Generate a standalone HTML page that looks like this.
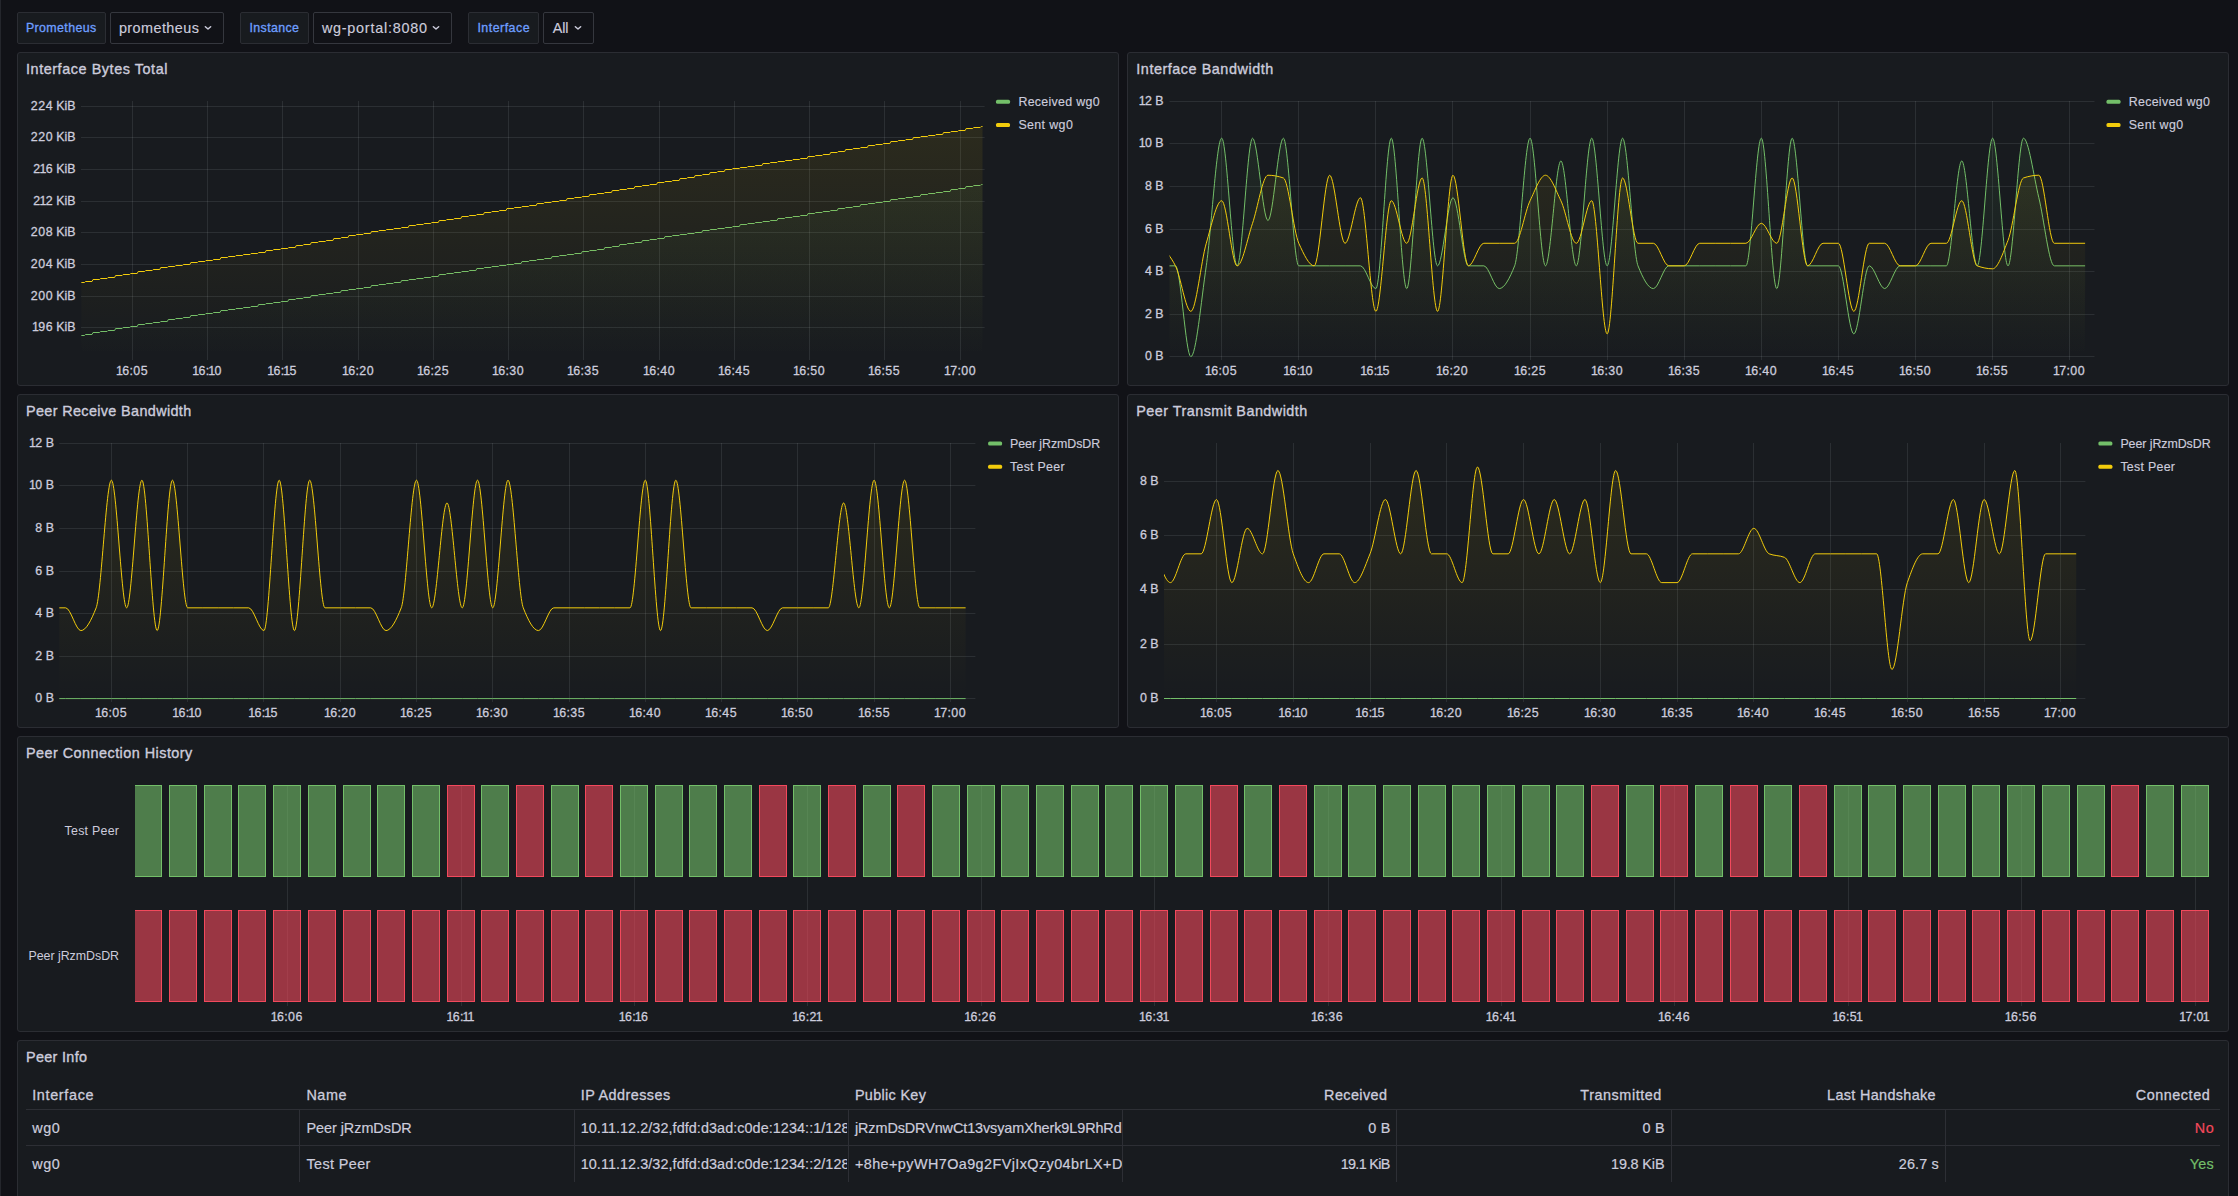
<!DOCTYPE html>
<html lang="en"><head><meta charset="utf-8"><title>WireGuard Portal - Grafana</title>
<style>
html,body{margin:0;padding:0;background:#111217;}
body{width:2238px;height:1196px;overflow:hidden;position:relative;font-family:"Liberation Sans",sans-serif;color:#ccccdc;}
.t{position:absolute;white-space:nowrap;line-height:20px;margin:0;padding:0;}
.abs{position:absolute;width:0;height:0;}
.panel{position:absolute;box-sizing:border-box;background:#181b1f;border:1px solid #2b2d33;border-radius:3px;overflow:hidden;}
.cv{position:absolute;overflow:visible;}
.cv text{font-family:"Liberation Sans",sans-serif;}
.vl{position:absolute;box-sizing:border-box;top:12px;height:32px;background:#181b1f;border:1px solid #2b2d33;border-radius:2px;}
.vs{position:absolute;box-sizing:border-box;top:12px;height:32px;background:#111217;border:1px solid #35373e;border-radius:2px;}
.edge{position:absolute;left:0;top:0;width:1px;height:1196px;background:#24262c;}
.hl{position:absolute;height:1px;background:#2d2f35;}
.vln{position:absolute;width:1px;background:#2d2f35;}
</style></head><body>
<div class="edge"></div>

<nav class="abs" style="left:0;top:0">
<div class="var">
<label class="vl" style="left:17px;width:89px"><span class="abs" style="left:-18px;top:-13px"><span class="t" style="top:18.30px;font-size:12.4px;color:#6e9fff;letter-spacing:0.394px;-webkit-text-stroke:0.3px #6e9fff;left:25.90px;">Prometheus</span></span></label>
<div class="vs" role="combobox" style="left:110px;width:114px"><span class="abs" style="left:-111px;top:-13px"><span class="t" style="top:18.00px;font-size:14.4px;color:#ccccdc;letter-spacing:0.439px;-webkit-text-stroke:0.15px #ccccdc;left:118.90px;">prometheus</span><svg style="position:absolute;left:202.0px;top:22.3px" width="12" height="12" viewBox="0 0 12 12"><path d="M3.35 4.75 L6 7.0 L8.65 4.75" fill="none" stroke="#ccccdc" stroke-width="1.5" stroke-linecap="round" stroke-linejoin="round"/></svg></span></div>
</div>
<div class="var">
<label class="vl" style="left:240px;width:69px"><span class="abs" style="left:-241px;top:-13px"><span class="t" style="top:18.30px;font-size:12.4px;color:#6e9fff;letter-spacing:0.375px;-webkit-text-stroke:0.3px #6e9fff;left:249.50px;">Instance</span></span></label>
<div class="vs" role="combobox" style="left:313px;width:139px"><span class="abs" style="left:-314px;top:-13px"><span class="t" style="top:18.00px;font-size:14.4px;color:#ccccdc;letter-spacing:0.757px;-webkit-text-stroke:0.15px #ccccdc;left:321.90px;">wg-portal:8080</span><svg style="position:absolute;left:430.0px;top:22.3px" width="12" height="12" viewBox="0 0 12 12"><path d="M3.35 4.75 L6 7.0 L8.65 4.75" fill="none" stroke="#ccccdc" stroke-width="1.5" stroke-linecap="round" stroke-linejoin="round"/></svg></span></div>
</div>
<div class="var">
<label class="vl" style="left:468px;width:71px"><span class="abs" style="left:-469px;top:-13px"><span class="t" style="top:18.30px;font-size:12.4px;color:#6e9fff;letter-spacing:0.494px;-webkit-text-stroke:0.3px #6e9fff;left:477.40px;">Interface</span></span></label>
<div class="vs" role="combobox" style="left:543px;width:51px"><span class="abs" style="left:-544px;top:-13px"><span class="t" style="top:18.00px;font-size:14.4px;color:#ccccdc;letter-spacing:-0.152px;-webkit-text-stroke:0.15px #ccccdc;left:552.80px;">All</span><svg style="position:absolute;left:572.0px;top:22.3px" width="12" height="12" viewBox="0 0 12 12"><path d="M3.35 4.75 L6 7.0 L8.65 4.75" fill="none" stroke="#ccccdc" stroke-width="1.5" stroke-linecap="round" stroke-linejoin="round"/></svg></span></div>
</div>
</nav>
<section class="panel" style="left:17px;top:52px;width:1102px;height:334px"><div class="abs" style="left:-18px;top:-53px"><span class="t h" style="top:59.40px;font-size:14.4px;color:#ccccdc;letter-spacing:0.565px;-webkit-text-stroke:0.35px #ccccdc;left:26.00px;">Interface Bytes Total</span>
<svg class="cv" style="left:17px;top:52px" width="1102" height="334" viewBox="17 52 1102 334">
<defs><clipPath id="cp1"><rect x="81.00" y="99.30" width="903.60" height="258.20"/></clipPath><linearGradient id="g2" gradientUnits="userSpaceOnUse" x1="0" y1="101.30" x2="0" y2="356.50"><stop offset="0" stop-color="#73bf69" stop-opacity="0.1"/><stop offset="1" stop-color="#73bf69" stop-opacity="0"/></linearGradient><linearGradient id="g3" gradientUnits="userSpaceOnUse" x1="0" y1="101.30" x2="0" y2="356.50"><stop offset="0" stop-color="#f2cc0c" stop-opacity="0.1"/><stop offset="1" stop-color="#f2cc0c" stop-opacity="0"/></linearGradient></defs>
<path d="M132.5,101V360M207.5,101V360M282.5,101V360M358.5,101V360M433.5,101V360M508.5,101V360M583.5,101V360M659.5,101V360M734.5,101V360M809.5,101V360M884.5,101V360M960.5,101V360M81.0,106.5H984.6M81.0,137.5H984.6M81.0,169.5H984.6M81.0,201.5H984.6M81.0,232.5H984.6M81.0,264.5H984.6M81.0,296.5H984.6M81.0,327.5H984.6" stroke="rgba(240,250,255,0.09)" stroke-width="1" fill="none"/>
<g clip-path="url(#cp1)">
<path d="M81.35,335.50L84.49,335.50L85.49,334.50L92.02,334.50L93.02,332.50L99.54,332.50L100.54,331.50L107.07,331.50L108.07,330.50L114.60,330.50L115.60,328.50L122.12,328.50L123.12,327.50L129.65,327.50L130.65,326.50L137.18,326.50L138.18,324.50L144.71,324.50L145.71,323.50L152.23,323.50L153.23,322.50L159.76,322.50L160.76,321.50L167.29,321.50L168.29,319.50L174.81,319.50L175.81,318.50L182.34,318.50L183.34,317.50L189.87,317.50L190.87,315.50L197.39,315.50L198.39,314.50L204.92,314.50L205.92,313.50L212.45,313.50L213.45,312.50L219.98,312.50L220.98,310.50L227.50,310.50L228.50,309.50L235.03,309.50L236.03,308.50L242.56,308.50L243.56,307.50L250.08,307.50L251.08,306.50L257.61,306.50L258.61,304.50L265.14,304.50L266.14,303.50L272.66,303.50L273.66,302.50L280.19,302.50L281.19,301.50L287.72,301.50L288.72,299.50L295.25,299.50L296.25,298.50L302.77,298.50L303.77,297.50L310.30,297.50L311.30,295.50L317.83,295.50L318.83,294.50L325.35,294.50L326.35,293.50L332.88,293.50L333.88,292.50L340.41,292.50L341.41,290.50L347.93,290.50L348.93,289.50L355.46,289.50L356.46,288.50L362.99,288.50L363.99,287.50L370.52,287.50L371.52,285.50L378.04,285.50L379.04,284.50L385.57,284.50L386.57,283.50L393.10,283.50L394.10,282.50L400.62,282.50L401.62,280.50L408.15,280.50L409.15,279.50L415.68,279.50L416.68,278.50L423.20,278.50L424.20,277.50L430.73,277.50L431.73,276.50L438.26,276.50L439.26,274.50L445.79,274.50L446.79,273.50L453.31,273.50L454.31,272.50L460.84,272.50L461.84,271.50L468.37,271.50L469.37,270.50L475.89,270.50L476.89,268.50L483.42,268.50L484.42,267.50L490.95,267.50L491.95,266.50L498.47,266.50L499.47,265.50L506.00,265.50L507.00,264.50L513.53,264.50L514.53,263.50L521.06,263.50L522.06,261.50L528.58,261.50L529.58,260.50L536.11,260.50L537.11,259.50L543.64,259.50L544.64,258.50L551.16,258.50L552.16,256.50L558.69,256.50L559.69,255.50L566.22,255.50L567.22,254.50L573.74,254.50L574.74,253.50L581.27,253.50L582.27,251.50L588.80,251.50L589.80,250.50L596.33,250.50L597.33,249.50L603.85,249.50L604.85,247.50L611.38,247.50L612.38,246.50L618.91,246.50L619.91,244.50L626.43,244.50L627.43,243.50L633.96,243.50L634.96,242.50L641.49,242.50L642.49,240.50L649.01,240.50L650.01,239.50L656.54,239.50L657.54,238.50L664.07,238.50L665.07,236.50L671.60,236.50L672.60,235.50L679.12,235.50L680.12,234.50L686.65,234.50L687.65,233.50L694.18,233.50L695.18,232.50L701.70,232.50L702.70,230.50L709.23,230.50L710.23,229.50L716.76,229.50L717.76,228.50L724.28,228.50L725.28,227.50L731.81,227.50L732.81,226.50L739.34,226.50L740.34,224.50L746.87,224.50L747.87,223.50L754.39,223.50L755.39,222.50L761.92,222.50L762.92,221.50L769.45,221.50L770.45,220.50L776.97,220.50L777.97,218.50L784.50,218.50L785.50,217.50L792.03,217.50L793.03,216.50L799.55,216.50L800.55,215.50L807.08,215.50L808.08,213.50L814.61,213.50L815.61,212.50L822.14,212.50L823.14,211.50L829.66,211.50L830.66,210.50L837.19,210.50L838.19,208.50L844.72,208.50L845.72,207.50L852.24,207.50L853.24,206.50L859.77,206.50L860.77,204.50L867.30,204.50L868.30,203.50L874.82,203.50L875.82,202.50L882.35,202.50L883.35,201.50L889.88,201.50L890.88,199.50L897.41,199.50L898.41,198.50L904.93,198.50L905.93,197.50L912.46,197.50L913.46,196.50L919.99,196.50L920.99,194.50L927.51,194.50L928.51,193.50L935.04,193.50L936.04,192.50L942.57,192.50L943.57,191.50L950.09,191.50L951.09,189.50L957.62,189.50L958.62,188.50L965.15,188.50L966.15,186.50L972.68,186.50L973.68,185.50L980.20,185.50L981.20,184.50L981.50,184.50L982.50,184.50L982.50,356.50L81.35,356.50Z" fill="url(#g2)" stroke="none"/>
<path d="M81.35,335.50L84.49,335.50L85.49,334.50L92.02,334.50L93.02,332.50L99.54,332.50L100.54,331.50L107.07,331.50L108.07,330.50L114.60,330.50L115.60,328.50L122.12,328.50L123.12,327.50L129.65,327.50L130.65,326.50L137.18,326.50L138.18,324.50L144.71,324.50L145.71,323.50L152.23,323.50L153.23,322.50L159.76,322.50L160.76,321.50L167.29,321.50L168.29,319.50L174.81,319.50L175.81,318.50L182.34,318.50L183.34,317.50L189.87,317.50L190.87,315.50L197.39,315.50L198.39,314.50L204.92,314.50L205.92,313.50L212.45,313.50L213.45,312.50L219.98,312.50L220.98,310.50L227.50,310.50L228.50,309.50L235.03,309.50L236.03,308.50L242.56,308.50L243.56,307.50L250.08,307.50L251.08,306.50L257.61,306.50L258.61,304.50L265.14,304.50L266.14,303.50L272.66,303.50L273.66,302.50L280.19,302.50L281.19,301.50L287.72,301.50L288.72,299.50L295.25,299.50L296.25,298.50L302.77,298.50L303.77,297.50L310.30,297.50L311.30,295.50L317.83,295.50L318.83,294.50L325.35,294.50L326.35,293.50L332.88,293.50L333.88,292.50L340.41,292.50L341.41,290.50L347.93,290.50L348.93,289.50L355.46,289.50L356.46,288.50L362.99,288.50L363.99,287.50L370.52,287.50L371.52,285.50L378.04,285.50L379.04,284.50L385.57,284.50L386.57,283.50L393.10,283.50L394.10,282.50L400.62,282.50L401.62,280.50L408.15,280.50L409.15,279.50L415.68,279.50L416.68,278.50L423.20,278.50L424.20,277.50L430.73,277.50L431.73,276.50L438.26,276.50L439.26,274.50L445.79,274.50L446.79,273.50L453.31,273.50L454.31,272.50L460.84,272.50L461.84,271.50L468.37,271.50L469.37,270.50L475.89,270.50L476.89,268.50L483.42,268.50L484.42,267.50L490.95,267.50L491.95,266.50L498.47,266.50L499.47,265.50L506.00,265.50L507.00,264.50L513.53,264.50L514.53,263.50L521.06,263.50L522.06,261.50L528.58,261.50L529.58,260.50L536.11,260.50L537.11,259.50L543.64,259.50L544.64,258.50L551.16,258.50L552.16,256.50L558.69,256.50L559.69,255.50L566.22,255.50L567.22,254.50L573.74,254.50L574.74,253.50L581.27,253.50L582.27,251.50L588.80,251.50L589.80,250.50L596.33,250.50L597.33,249.50L603.85,249.50L604.85,247.50L611.38,247.50L612.38,246.50L618.91,246.50L619.91,244.50L626.43,244.50L627.43,243.50L633.96,243.50L634.96,242.50L641.49,242.50L642.49,240.50L649.01,240.50L650.01,239.50L656.54,239.50L657.54,238.50L664.07,238.50L665.07,236.50L671.60,236.50L672.60,235.50L679.12,235.50L680.12,234.50L686.65,234.50L687.65,233.50L694.18,233.50L695.18,232.50L701.70,232.50L702.70,230.50L709.23,230.50L710.23,229.50L716.76,229.50L717.76,228.50L724.28,228.50L725.28,227.50L731.81,227.50L732.81,226.50L739.34,226.50L740.34,224.50L746.87,224.50L747.87,223.50L754.39,223.50L755.39,222.50L761.92,222.50L762.92,221.50L769.45,221.50L770.45,220.50L776.97,220.50L777.97,218.50L784.50,218.50L785.50,217.50L792.03,217.50L793.03,216.50L799.55,216.50L800.55,215.50L807.08,215.50L808.08,213.50L814.61,213.50L815.61,212.50L822.14,212.50L823.14,211.50L829.66,211.50L830.66,210.50L837.19,210.50L838.19,208.50L844.72,208.50L845.72,207.50L852.24,207.50L853.24,206.50L859.77,206.50L860.77,204.50L867.30,204.50L868.30,203.50L874.82,203.50L875.82,202.50L882.35,202.50L883.35,201.50L889.88,201.50L890.88,199.50L897.41,199.50L898.41,198.50L904.93,198.50L905.93,197.50L912.46,197.50L913.46,196.50L919.99,196.50L920.99,194.50L927.51,194.50L928.51,193.50L935.04,193.50L936.04,192.50L942.57,192.50L943.57,191.50L950.09,191.50L951.09,189.50L957.62,189.50L958.62,188.50L965.15,188.50L966.15,186.50L972.68,186.50L973.68,185.50L980.20,185.50L981.20,184.50L981.50,184.50L982.50,184.50" fill="none" stroke="#73bf69" stroke-width="1" stroke-linejoin="round"/>
<path d="M81.35,282.50L84.49,282.50L85.49,281.50L92.02,281.50L93.02,279.50L99.54,279.50L100.54,278.50L107.07,278.50L108.07,277.50L114.60,277.50L115.60,275.50L122.12,275.50L123.12,274.50L129.65,274.50L130.65,273.50L137.18,273.50L138.18,271.50L144.71,271.50L145.71,270.50L152.23,270.50L153.23,269.50L159.76,269.50L160.76,267.50L167.29,267.50L168.29,266.50L174.81,266.50L175.81,265.50L182.34,265.50L183.34,264.50L189.87,264.50L190.87,262.50L197.39,262.50L198.39,261.50L204.92,261.50L205.92,260.50L212.45,260.50L213.45,259.50L219.98,259.50L220.98,257.50L227.50,257.50L228.50,256.50L235.03,256.50L236.03,255.50L242.56,255.50L243.56,254.50L250.08,254.50L251.08,253.50L257.61,253.50L258.61,252.50L265.14,252.50L266.14,250.50L272.66,250.50L273.66,249.50L280.19,249.50L281.19,248.50L287.72,248.50L288.72,247.50L295.25,247.50L296.25,245.50L302.77,245.50L303.77,244.50L310.30,244.50L311.30,242.50L317.83,242.50L318.83,241.50L325.35,241.50L326.35,240.50L332.88,240.50L333.88,238.50L340.41,238.50L341.41,237.50L347.93,237.50L348.93,235.50L355.46,235.50L356.46,234.50L362.99,234.50L363.99,233.50L370.52,233.50L371.52,231.50L378.04,231.50L379.04,230.50L385.57,230.50L386.57,229.50L393.10,229.50L394.10,228.50L400.62,228.50L401.62,227.50L408.15,227.50L409.15,225.50L415.68,225.50L416.68,224.50L423.20,224.50L424.20,223.50L430.73,223.50L431.73,222.50L438.26,222.50L439.26,220.50L445.79,220.50L446.79,219.50L453.31,219.50L454.31,218.50L460.84,218.50L461.84,216.50L468.37,216.50L469.37,215.50L475.89,215.50L476.89,214.50L483.42,214.50L484.42,212.50L490.95,212.50L491.95,211.50L498.47,211.50L499.47,210.50L506.00,210.50L507.00,208.50L513.53,208.50L514.53,207.50L521.06,207.50L522.06,206.50L528.58,206.50L529.58,205.50L536.11,205.50L537.11,203.50L543.64,203.50L544.64,202.50L551.16,202.50L552.16,201.50L558.69,201.50L559.69,200.50L566.22,200.50L567.22,198.50L573.74,198.50L574.74,197.50L581.27,197.50L582.27,196.50L588.80,196.50L589.80,194.50L596.33,194.50L597.33,193.50L603.85,193.50L604.85,192.50L611.38,192.50L612.38,190.50L618.91,190.50L619.91,189.50L626.43,189.50L627.43,188.50L633.96,188.50L634.96,186.50L641.49,186.50L642.49,185.50L649.01,185.50L650.01,184.50L656.54,184.50L657.54,182.50L664.07,182.50L665.07,181.50L671.60,181.50L672.60,180.50L679.12,180.50L680.12,178.50L686.65,178.50L687.65,177.50L694.18,177.50L695.18,175.50L701.70,175.50L702.70,174.50L709.23,174.50L710.23,172.50L716.76,172.50L717.76,171.50L724.28,171.50L725.28,169.50L731.81,169.50L732.81,168.50L739.34,168.50L740.34,167.50L746.87,167.50L747.87,166.50L754.39,166.50L755.39,165.50L761.92,165.50L762.92,163.50L769.45,163.50L770.45,162.50L776.97,162.50L777.97,161.50L784.50,161.50L785.50,160.50L792.03,160.50L793.03,159.50L799.55,159.50L800.55,158.50L807.08,158.50L808.08,156.50L814.61,156.50L815.61,155.50L822.14,155.50L823.14,154.50L829.66,154.50L830.66,152.50L837.19,152.50L838.19,151.50L844.72,151.50L845.72,149.50L852.24,149.50L853.24,148.50L859.77,148.50L860.77,147.50L867.30,147.50L868.30,145.50L874.82,145.50L875.82,144.50L882.35,144.50L883.35,143.50L889.88,143.50L890.88,141.50L897.41,141.50L898.41,140.50L904.93,140.50L905.93,139.50L912.46,139.50L913.46,137.50L919.99,137.50L920.99,136.50L927.51,136.50L928.51,135.50L935.04,135.50L936.04,134.50L942.57,134.50L943.57,132.50L950.09,132.50L951.09,131.50L957.62,131.50L958.62,130.50L965.15,130.50L966.15,128.50L972.68,128.50L973.68,127.50L980.20,127.50L981.20,126.50L981.50,126.50L982.50,126.50L982.50,356.50L81.35,356.50Z" fill="url(#g3)" stroke="none"/>
<path d="M81.35,282.50L84.49,282.50L85.49,281.50L92.02,281.50L93.02,279.50L99.54,279.50L100.54,278.50L107.07,278.50L108.07,277.50L114.60,277.50L115.60,275.50L122.12,275.50L123.12,274.50L129.65,274.50L130.65,273.50L137.18,273.50L138.18,271.50L144.71,271.50L145.71,270.50L152.23,270.50L153.23,269.50L159.76,269.50L160.76,267.50L167.29,267.50L168.29,266.50L174.81,266.50L175.81,265.50L182.34,265.50L183.34,264.50L189.87,264.50L190.87,262.50L197.39,262.50L198.39,261.50L204.92,261.50L205.92,260.50L212.45,260.50L213.45,259.50L219.98,259.50L220.98,257.50L227.50,257.50L228.50,256.50L235.03,256.50L236.03,255.50L242.56,255.50L243.56,254.50L250.08,254.50L251.08,253.50L257.61,253.50L258.61,252.50L265.14,252.50L266.14,250.50L272.66,250.50L273.66,249.50L280.19,249.50L281.19,248.50L287.72,248.50L288.72,247.50L295.25,247.50L296.25,245.50L302.77,245.50L303.77,244.50L310.30,244.50L311.30,242.50L317.83,242.50L318.83,241.50L325.35,241.50L326.35,240.50L332.88,240.50L333.88,238.50L340.41,238.50L341.41,237.50L347.93,237.50L348.93,235.50L355.46,235.50L356.46,234.50L362.99,234.50L363.99,233.50L370.52,233.50L371.52,231.50L378.04,231.50L379.04,230.50L385.57,230.50L386.57,229.50L393.10,229.50L394.10,228.50L400.62,228.50L401.62,227.50L408.15,227.50L409.15,225.50L415.68,225.50L416.68,224.50L423.20,224.50L424.20,223.50L430.73,223.50L431.73,222.50L438.26,222.50L439.26,220.50L445.79,220.50L446.79,219.50L453.31,219.50L454.31,218.50L460.84,218.50L461.84,216.50L468.37,216.50L469.37,215.50L475.89,215.50L476.89,214.50L483.42,214.50L484.42,212.50L490.95,212.50L491.95,211.50L498.47,211.50L499.47,210.50L506.00,210.50L507.00,208.50L513.53,208.50L514.53,207.50L521.06,207.50L522.06,206.50L528.58,206.50L529.58,205.50L536.11,205.50L537.11,203.50L543.64,203.50L544.64,202.50L551.16,202.50L552.16,201.50L558.69,201.50L559.69,200.50L566.22,200.50L567.22,198.50L573.74,198.50L574.74,197.50L581.27,197.50L582.27,196.50L588.80,196.50L589.80,194.50L596.33,194.50L597.33,193.50L603.85,193.50L604.85,192.50L611.38,192.50L612.38,190.50L618.91,190.50L619.91,189.50L626.43,189.50L627.43,188.50L633.96,188.50L634.96,186.50L641.49,186.50L642.49,185.50L649.01,185.50L650.01,184.50L656.54,184.50L657.54,182.50L664.07,182.50L665.07,181.50L671.60,181.50L672.60,180.50L679.12,180.50L680.12,178.50L686.65,178.50L687.65,177.50L694.18,177.50L695.18,175.50L701.70,175.50L702.70,174.50L709.23,174.50L710.23,172.50L716.76,172.50L717.76,171.50L724.28,171.50L725.28,169.50L731.81,169.50L732.81,168.50L739.34,168.50L740.34,167.50L746.87,167.50L747.87,166.50L754.39,166.50L755.39,165.50L761.92,165.50L762.92,163.50L769.45,163.50L770.45,162.50L776.97,162.50L777.97,161.50L784.50,161.50L785.50,160.50L792.03,160.50L793.03,159.50L799.55,159.50L800.55,158.50L807.08,158.50L808.08,156.50L814.61,156.50L815.61,155.50L822.14,155.50L823.14,154.50L829.66,154.50L830.66,152.50L837.19,152.50L838.19,151.50L844.72,151.50L845.72,149.50L852.24,149.50L853.24,148.50L859.77,148.50L860.77,147.50L867.30,147.50L868.30,145.50L874.82,145.50L875.82,144.50L882.35,144.50L883.35,143.50L889.88,143.50L890.88,141.50L897.41,141.50L898.41,140.50L904.93,140.50L905.93,139.50L912.46,139.50L913.46,137.50L919.99,137.50L920.99,136.50L927.51,136.50L928.51,135.50L935.04,135.50L936.04,134.50L942.57,134.50L943.57,132.50L950.09,132.50L951.09,131.50L957.62,131.50L958.62,130.50L965.15,130.50L966.15,128.50L972.68,128.50L973.68,127.50L980.20,127.50L981.20,126.50L981.50,126.50L982.50,126.50" fill="none" stroke="#f2cc0c" stroke-width="1" stroke-linejoin="round"/>
</g>
<text x="116.05 122.30 129.53 133.30 140.80" y="375.40" font-size="12.4" fill="#ccccdc" stroke="#ccccdc" stroke-width="0.3">16:05</text>
<text x="192.30 198.55 205.78 208.30 214.55" y="375.40" font-size="12.4" fill="#ccccdc" stroke="#ccccdc" stroke-width="0.3">16:10</text>
<text x="267.30 273.55 280.78 283.30 289.55" y="375.40" font-size="12.4" fill="#ccccdc" stroke="#ccccdc" stroke-width="0.3">16:15</text>
<text x="342.05 348.30 355.53 359.30 366.80" y="375.40" font-size="12.4" fill="#ccccdc" stroke="#ccccdc" stroke-width="0.3">16:20</text>
<text x="417.05 423.30 430.53 434.30 441.80" y="375.40" font-size="12.4" fill="#ccccdc" stroke="#ccccdc" stroke-width="0.3">16:25</text>
<text x="492.05 498.30 505.53 509.30 516.80" y="375.40" font-size="12.4" fill="#ccccdc" stroke="#ccccdc" stroke-width="0.3">16:30</text>
<text x="567.05 573.30 580.53 584.30 591.80" y="375.40" font-size="12.4" fill="#ccccdc" stroke="#ccccdc" stroke-width="0.3">16:35</text>
<text x="643.05 649.30 656.53 660.30 667.80" y="375.40" font-size="12.4" fill="#ccccdc" stroke="#ccccdc" stroke-width="0.3">16:40</text>
<text x="718.05 724.30 731.53 735.30 742.80" y="375.40" font-size="12.4" fill="#ccccdc" stroke="#ccccdc" stroke-width="0.3">16:45</text>
<text x="793.05 799.30 806.53 810.30 817.80" y="375.40" font-size="12.4" fill="#ccccdc" stroke="#ccccdc" stroke-width="0.3">16:50</text>
<text x="868.05 874.30 881.53 885.30 892.80" y="375.40" font-size="12.4" fill="#ccccdc" stroke="#ccccdc" stroke-width="0.3">16:55</text>
<text x="944.05 950.30 957.53 961.30 968.80" y="375.40" font-size="12.4" fill="#ccccdc" stroke="#ccccdc" stroke-width="0.3">17:00</text>
<text x="30.80 38.30 45.80 52.98 56.26 64.57 67.36" y="110.40" font-size="12.4" fill="#ccccdc" stroke="#ccccdc" stroke-width="0.3">224 KiB</text>
<text x="30.80 38.30 45.80 52.98 56.26 64.57 67.36" y="141.40" font-size="12.4" fill="#ccccdc" stroke="#ccccdc" stroke-width="0.3">220 KiB</text>
<text x="33.30 39.55 45.80 52.98 56.26 64.57 67.36" y="173.40" font-size="12.4" fill="#ccccdc" stroke="#ccccdc" stroke-width="0.3">216 KiB</text>
<text x="33.30 39.55 45.80 52.98 56.26 64.57 67.36" y="205.40" font-size="12.4" fill="#ccccdc" stroke="#ccccdc" stroke-width="0.3">212 KiB</text>
<text x="30.80 38.30 45.80 52.98 56.26 64.57 67.36" y="236.40" font-size="12.4" fill="#ccccdc" stroke="#ccccdc" stroke-width="0.3">208 KiB</text>
<text x="30.80 38.30 45.80 52.98 56.26 64.57 67.36" y="268.40" font-size="12.4" fill="#ccccdc" stroke="#ccccdc" stroke-width="0.3">204 KiB</text>
<text x="30.80 38.30 45.80 52.98 56.26 64.57 67.36" y="300.40" font-size="12.4" fill="#ccccdc" stroke="#ccccdc" stroke-width="0.3">200 KiB</text>
<text x="32.05 38.30 45.80 52.98 56.26 64.57 67.36" y="331.40" font-size="12.4" fill="#ccccdc" stroke="#ccccdc" stroke-width="0.3">196 KiB</text>
<rect x="996.00" y="99.70" width="14" height="4" rx="1.5" fill="#73bf69"/>
<text x="1018.40" y="106.00" font-size="12.4" fill="#ccccdc" textLength="81.20" lengthAdjust="spacing" stroke="#ccccdc" stroke-width="0.15">Received wg0</text>
<rect x="996.00" y="122.90" width="14" height="4" rx="1.5" fill="#f2cc0c"/>
<text x="1018.40" y="129.20" font-size="12.4" fill="#ccccdc" textLength="54.40" lengthAdjust="spacing" stroke="#ccccdc" stroke-width="0.15">Sent wg0</text>
</svg>
</div></section>
<section class="panel" style="left:1127px;top:52px;width:1102px;height:334px"><div class="abs" style="left:-1128px;top:-53px"><span class="t h" style="top:59.40px;font-size:14.4px;color:#ccccdc;letter-spacing:0.540px;-webkit-text-stroke:0.35px #ccccdc;left:1136.30px;">Interface Bandwidth</span>
<svg class="cv" style="left:1127px;top:52px" width="1102" height="334" viewBox="1127 52 1102 334">
<defs><clipPath id="cp4"><rect x="1169.50" y="99.50" width="925.00" height="258.00"/></clipPath><linearGradient id="g5" gradientUnits="userSpaceOnUse" x1="0" y1="101.50" x2="0" y2="356.50"><stop offset="0" stop-color="#73bf69" stop-opacity="0.1"/><stop offset="1" stop-color="#73bf69" stop-opacity="0"/></linearGradient><linearGradient id="g6" gradientUnits="userSpaceOnUse" x1="0" y1="101.50" x2="0" y2="356.50"><stop offset="0" stop-color="#f2cc0c" stop-opacity="0.1"/><stop offset="1" stop-color="#f2cc0c" stop-opacity="0"/></linearGradient></defs>
<path d="M1221.5,101V360M1298.5,101V360M1375.5,101V360M1452.5,101V360M1530.5,101V360M1607.5,101V360M1684.5,101V360M1761.5,101V360M1838.5,101V360M1915.5,101V360M1992.5,101V360M2069.5,101V360M1169.5,101.5H2094.5M1169.5,143.5H2094.5M1169.5,186.5H2094.5M1169.5,229.5H2094.5M1169.5,271.5H2094.5M1169.5,314.5H2094.5M1169.5,356.5H2094.5" stroke="rgba(240,250,255,0.09)" stroke-width="1" fill="none"/>
<g clip-path="url(#cp4)">
<path d="M1160.03,265.83C1165.17,265.83 1170.31,265.83 1175.45,265.83C1180.59,265.83 1185.72,356.65 1190.86,356.65C1196.00,356.65 1201.14,301.20 1206.28,265.83C1211.42,230.45 1216.56,138.21 1221.70,138.21C1226.84,138.21 1231.98,265.83 1237.12,265.83C1242.26,265.83 1247.40,138.21 1252.54,138.21C1257.68,138.21 1262.81,220.52 1267.95,220.52C1273.09,220.52 1278.23,138.21 1283.37,138.21C1288.51,138.21 1293.65,265.83 1298.79,265.83C1303.93,265.83 1309.07,265.83 1314.21,265.83C1319.35,265.83 1324.49,265.83 1329.63,265.83C1334.77,265.83 1339.90,265.83 1345.04,265.83C1350.18,265.83 1355.32,265.83 1360.46,265.83C1365.60,265.83 1370.74,288.59 1375.88,288.59C1381.02,288.59 1386.16,138.21 1391.30,138.21C1396.44,138.21 1401.58,288.59 1406.72,288.59C1411.86,288.59 1416.99,138.21 1422.13,138.21C1427.27,138.21 1432.41,265.83 1437.55,265.83C1442.69,265.83 1447.83,197.76 1452.97,197.76C1458.11,197.76 1463.25,265.83 1468.39,265.83C1473.53,265.83 1478.67,265.83 1483.81,265.83C1488.95,265.83 1494.08,288.59 1499.22,288.59C1504.36,288.59 1509.50,278.70 1514.64,265.83C1519.78,252.95 1524.92,138.21 1530.06,138.21C1535.20,138.21 1540.34,265.83 1545.48,265.83C1550.62,265.83 1555.76,160.97 1560.90,160.97C1566.04,160.97 1571.17,265.83 1576.31,265.83C1581.45,265.83 1586.59,138.21 1591.73,138.21C1596.87,138.21 1602.01,265.83 1607.15,265.83C1612.29,265.83 1617.43,138.21 1622.57,138.21C1627.71,138.21 1632.85,252.95 1637.99,265.83C1643.13,278.70 1648.26,288.59 1653.40,288.59C1658.54,288.59 1663.68,265.83 1668.82,265.83C1673.96,265.83 1679.10,265.83 1684.24,265.83C1689.38,265.83 1694.52,265.83 1699.66,265.83C1704.80,265.83 1709.94,265.83 1715.08,265.83C1720.22,265.83 1725.35,265.83 1730.49,265.83C1735.63,265.83 1740.77,265.83 1745.91,265.83C1751.05,265.83 1756.19,138.21 1761.33,138.21C1766.47,138.21 1771.61,288.59 1776.75,288.59C1781.89,288.59 1787.03,138.21 1792.17,138.21C1797.31,138.21 1802.44,265.83 1807.58,265.83C1812.72,265.83 1817.86,265.83 1823.00,265.83C1828.14,265.83 1833.28,265.83 1838.42,265.83C1843.56,265.83 1848.70,333.89 1853.84,333.89C1858.98,333.89 1864.12,265.83 1869.26,265.83C1874.40,265.83 1879.53,288.59 1884.67,288.59C1889.81,288.59 1894.95,265.83 1900.09,265.83C1905.23,265.83 1910.37,265.83 1915.51,265.83C1920.65,265.83 1925.79,265.83 1930.93,265.83C1936.07,265.83 1941.21,265.83 1946.35,265.83C1951.49,265.83 1956.62,160.97 1961.76,160.97C1966.90,160.97 1972.04,265.83 1977.18,265.83C1982.32,265.83 1987.46,138.21 1992.60,138.21C1997.74,138.21 2002.88,265.83 2008.02,265.83C2013.16,265.83 2018.30,138.21 2023.44,138.21C2028.58,138.21 2033.71,176.59 2038.85,197.76C2043.99,218.94 2049.13,265.83 2054.27,265.83C2059.41,265.83 2064.55,265.83 2069.69,265.83C2074.83,265.83 2079.97,265.83 2085.11,265.83L2085.11,356.50L1160.03,356.50Z" fill="url(#g5)" stroke="none"/>
<path d="M1160.03,265.83C1165.17,265.83 1170.31,265.83 1175.45,265.83C1180.59,265.83 1185.72,356.65 1190.86,356.65C1196.00,356.65 1201.14,301.20 1206.28,265.83C1211.42,230.45 1216.56,138.21 1221.70,138.21C1226.84,138.21 1231.98,265.83 1237.12,265.83C1242.26,265.83 1247.40,138.21 1252.54,138.21C1257.68,138.21 1262.81,220.52 1267.95,220.52C1273.09,220.52 1278.23,138.21 1283.37,138.21C1288.51,138.21 1293.65,265.83 1298.79,265.83C1303.93,265.83 1309.07,265.83 1314.21,265.83C1319.35,265.83 1324.49,265.83 1329.63,265.83C1334.77,265.83 1339.90,265.83 1345.04,265.83C1350.18,265.83 1355.32,265.83 1360.46,265.83C1365.60,265.83 1370.74,288.59 1375.88,288.59C1381.02,288.59 1386.16,138.21 1391.30,138.21C1396.44,138.21 1401.58,288.59 1406.72,288.59C1411.86,288.59 1416.99,138.21 1422.13,138.21C1427.27,138.21 1432.41,265.83 1437.55,265.83C1442.69,265.83 1447.83,197.76 1452.97,197.76C1458.11,197.76 1463.25,265.83 1468.39,265.83C1473.53,265.83 1478.67,265.83 1483.81,265.83C1488.95,265.83 1494.08,288.59 1499.22,288.59C1504.36,288.59 1509.50,278.70 1514.64,265.83C1519.78,252.95 1524.92,138.21 1530.06,138.21C1535.20,138.21 1540.34,265.83 1545.48,265.83C1550.62,265.83 1555.76,160.97 1560.90,160.97C1566.04,160.97 1571.17,265.83 1576.31,265.83C1581.45,265.83 1586.59,138.21 1591.73,138.21C1596.87,138.21 1602.01,265.83 1607.15,265.83C1612.29,265.83 1617.43,138.21 1622.57,138.21C1627.71,138.21 1632.85,252.95 1637.99,265.83C1643.13,278.70 1648.26,288.59 1653.40,288.59C1658.54,288.59 1663.68,265.83 1668.82,265.83C1673.96,265.83 1679.10,265.83 1684.24,265.83C1689.38,265.83 1694.52,265.83 1699.66,265.83C1704.80,265.83 1709.94,265.83 1715.08,265.83C1720.22,265.83 1725.35,265.83 1730.49,265.83C1735.63,265.83 1740.77,265.83 1745.91,265.83C1751.05,265.83 1756.19,138.21 1761.33,138.21C1766.47,138.21 1771.61,288.59 1776.75,288.59C1781.89,288.59 1787.03,138.21 1792.17,138.21C1797.31,138.21 1802.44,265.83 1807.58,265.83C1812.72,265.83 1817.86,265.83 1823.00,265.83C1828.14,265.83 1833.28,265.83 1838.42,265.83C1843.56,265.83 1848.70,333.89 1853.84,333.89C1858.98,333.89 1864.12,265.83 1869.26,265.83C1874.40,265.83 1879.53,288.59 1884.67,288.59C1889.81,288.59 1894.95,265.83 1900.09,265.83C1905.23,265.83 1910.37,265.83 1915.51,265.83C1920.65,265.83 1925.79,265.83 1930.93,265.83C1936.07,265.83 1941.21,265.83 1946.35,265.83C1951.49,265.83 1956.62,160.97 1961.76,160.97C1966.90,160.97 1972.04,265.83 1977.18,265.83C1982.32,265.83 1987.46,138.21 1992.60,138.21C1997.74,138.21 2002.88,265.83 2008.02,265.83C2013.16,265.83 2018.30,138.21 2023.44,138.21C2028.58,138.21 2033.71,176.59 2038.85,197.76C2043.99,218.94 2049.13,265.83 2054.27,265.83C2059.41,265.83 2064.55,265.83 2069.69,265.83C2074.83,265.83 2079.97,265.83 2085.11,265.83" fill="none" stroke="#73bf69" stroke-width="1" stroke-linejoin="round"/>
<path d="M1160.03,243.28C1165.17,250.80 1170.31,255.78 1175.45,265.83C1180.59,275.88 1185.72,311.34 1190.86,311.34C1196.00,311.34 1201.14,260.73 1206.28,243.28C1211.42,225.83 1216.56,200.74 1221.70,200.74C1226.84,200.74 1231.98,265.83 1237.12,265.83C1242.26,265.83 1247.40,238.33 1252.54,223.29C1257.68,208.24 1262.81,175.22 1267.95,175.22C1273.09,175.22 1278.23,176.21 1283.37,177.98C1288.51,179.75 1293.65,232.11 1298.79,243.28C1303.93,254.45 1309.07,265.83 1314.21,265.83C1319.35,265.83 1324.49,175.22 1329.63,175.22C1334.77,175.22 1339.90,243.28 1345.04,243.28C1350.18,243.28 1355.32,197.76 1360.46,197.76C1365.60,197.76 1370.74,311.34 1375.88,311.34C1381.02,311.34 1386.16,200.74 1391.30,200.74C1396.44,200.74 1401.58,243.28 1406.72,243.28C1411.86,243.28 1416.99,177.98 1422.13,177.98C1427.27,177.98 1432.41,311.34 1437.55,311.34C1442.69,311.34 1447.83,175.22 1452.97,175.22C1458.11,175.22 1463.25,265.83 1468.39,265.83C1473.53,265.83 1478.67,243.28 1483.81,243.28C1488.95,243.28 1494.08,243.28 1499.22,243.28C1504.36,243.28 1509.50,243.28 1514.64,243.28C1519.78,243.28 1524.92,211.38 1530.06,200.74C1535.20,190.11 1540.34,175.22 1545.48,175.22C1550.62,175.22 1555.76,190.11 1560.90,200.74C1566.04,211.38 1571.17,243.28 1576.31,243.28C1581.45,243.28 1586.59,200.74 1591.73,200.74C1596.87,200.74 1602.01,333.89 1607.15,333.89C1612.29,333.89 1617.43,177.98 1622.57,177.98C1627.71,177.98 1632.85,243.28 1637.99,243.28C1643.13,243.28 1648.26,243.28 1653.40,243.28C1658.54,243.28 1663.68,265.83 1668.82,265.83C1673.96,265.83 1679.10,265.83 1684.24,265.83C1689.38,265.83 1694.52,243.28 1699.66,243.28C1704.80,243.28 1709.94,243.28 1715.08,243.28C1720.22,243.28 1725.35,243.28 1730.49,243.28C1735.63,243.28 1740.77,243.28 1745.91,243.28C1751.05,243.28 1756.19,223.29 1761.33,223.29C1766.47,223.29 1771.61,243.28 1776.75,243.28C1781.89,243.28 1787.03,177.98 1792.17,177.98C1797.31,177.98 1802.44,265.83 1807.58,265.83C1812.72,265.83 1817.86,243.28 1823.00,243.28C1828.14,243.28 1833.28,243.28 1838.42,243.28C1843.56,243.28 1848.70,311.34 1853.84,311.34C1858.98,311.34 1864.12,243.28 1869.26,243.28C1874.40,243.28 1879.53,243.28 1884.67,243.28C1889.81,243.28 1894.95,265.83 1900.09,265.83C1905.23,265.83 1910.37,265.83 1915.51,265.83C1920.65,265.83 1925.79,243.28 1930.93,243.28C1936.07,243.28 1941.21,243.28 1946.35,243.28C1951.49,243.28 1956.62,200.74 1961.76,200.74C1966.90,200.74 1972.04,263.93 1977.18,265.83C1982.32,267.73 1987.46,268.80 1992.60,268.80C1997.74,268.80 2002.88,253.34 2008.02,240.30C2013.16,227.26 2018.30,179.75 2023.44,177.98C2028.58,176.22 2033.71,175.22 2038.85,175.22C2043.99,175.22 2049.13,243.28 2054.27,243.28C2059.41,243.28 2064.55,243.28 2069.69,243.28C2074.83,243.28 2079.97,243.28 2085.11,243.28L2085.11,356.50L1160.03,356.50Z" fill="url(#g6)" stroke="none"/>
<path d="M1160.03,243.28C1165.17,250.80 1170.31,255.78 1175.45,265.83C1180.59,275.88 1185.72,311.34 1190.86,311.34C1196.00,311.34 1201.14,260.73 1206.28,243.28C1211.42,225.83 1216.56,200.74 1221.70,200.74C1226.84,200.74 1231.98,265.83 1237.12,265.83C1242.26,265.83 1247.40,238.33 1252.54,223.29C1257.68,208.24 1262.81,175.22 1267.95,175.22C1273.09,175.22 1278.23,176.21 1283.37,177.98C1288.51,179.75 1293.65,232.11 1298.79,243.28C1303.93,254.45 1309.07,265.83 1314.21,265.83C1319.35,265.83 1324.49,175.22 1329.63,175.22C1334.77,175.22 1339.90,243.28 1345.04,243.28C1350.18,243.28 1355.32,197.76 1360.46,197.76C1365.60,197.76 1370.74,311.34 1375.88,311.34C1381.02,311.34 1386.16,200.74 1391.30,200.74C1396.44,200.74 1401.58,243.28 1406.72,243.28C1411.86,243.28 1416.99,177.98 1422.13,177.98C1427.27,177.98 1432.41,311.34 1437.55,311.34C1442.69,311.34 1447.83,175.22 1452.97,175.22C1458.11,175.22 1463.25,265.83 1468.39,265.83C1473.53,265.83 1478.67,243.28 1483.81,243.28C1488.95,243.28 1494.08,243.28 1499.22,243.28C1504.36,243.28 1509.50,243.28 1514.64,243.28C1519.78,243.28 1524.92,211.38 1530.06,200.74C1535.20,190.11 1540.34,175.22 1545.48,175.22C1550.62,175.22 1555.76,190.11 1560.90,200.74C1566.04,211.38 1571.17,243.28 1576.31,243.28C1581.45,243.28 1586.59,200.74 1591.73,200.74C1596.87,200.74 1602.01,333.89 1607.15,333.89C1612.29,333.89 1617.43,177.98 1622.57,177.98C1627.71,177.98 1632.85,243.28 1637.99,243.28C1643.13,243.28 1648.26,243.28 1653.40,243.28C1658.54,243.28 1663.68,265.83 1668.82,265.83C1673.96,265.83 1679.10,265.83 1684.24,265.83C1689.38,265.83 1694.52,243.28 1699.66,243.28C1704.80,243.28 1709.94,243.28 1715.08,243.28C1720.22,243.28 1725.35,243.28 1730.49,243.28C1735.63,243.28 1740.77,243.28 1745.91,243.28C1751.05,243.28 1756.19,223.29 1761.33,223.29C1766.47,223.29 1771.61,243.28 1776.75,243.28C1781.89,243.28 1787.03,177.98 1792.17,177.98C1797.31,177.98 1802.44,265.83 1807.58,265.83C1812.72,265.83 1817.86,243.28 1823.00,243.28C1828.14,243.28 1833.28,243.28 1838.42,243.28C1843.56,243.28 1848.70,311.34 1853.84,311.34C1858.98,311.34 1864.12,243.28 1869.26,243.28C1874.40,243.28 1879.53,243.28 1884.67,243.28C1889.81,243.28 1894.95,265.83 1900.09,265.83C1905.23,265.83 1910.37,265.83 1915.51,265.83C1920.65,265.83 1925.79,243.28 1930.93,243.28C1936.07,243.28 1941.21,243.28 1946.35,243.28C1951.49,243.28 1956.62,200.74 1961.76,200.74C1966.90,200.74 1972.04,263.93 1977.18,265.83C1982.32,267.73 1987.46,268.80 1992.60,268.80C1997.74,268.80 2002.88,253.34 2008.02,240.30C2013.16,227.26 2018.30,179.75 2023.44,177.98C2028.58,176.22 2033.71,175.22 2038.85,175.22C2043.99,175.22 2049.13,243.28 2054.27,243.28C2059.41,243.28 2064.55,243.28 2069.69,243.28C2074.83,243.28 2079.97,243.28 2085.11,243.28" fill="none" stroke="#f2cc0c" stroke-width="1" stroke-linejoin="round"/>
</g>
<text x="1205.05 1211.30 1218.53 1222.30 1229.80" y="375.40" font-size="12.4" fill="#ccccdc" stroke="#ccccdc" stroke-width="0.3">16:05</text>
<text x="1283.30 1289.55 1296.78 1299.30 1305.55" y="375.40" font-size="12.4" fill="#ccccdc" stroke="#ccccdc" stroke-width="0.3">16:10</text>
<text x="1360.30 1366.55 1373.78 1376.30 1382.55" y="375.40" font-size="12.4" fill="#ccccdc" stroke="#ccccdc" stroke-width="0.3">16:15</text>
<text x="1436.05 1442.30 1449.53 1453.30 1460.80" y="375.40" font-size="12.4" fill="#ccccdc" stroke="#ccccdc" stroke-width="0.3">16:20</text>
<text x="1514.05 1520.30 1527.53 1531.30 1538.80" y="375.40" font-size="12.4" fill="#ccccdc" stroke="#ccccdc" stroke-width="0.3">16:25</text>
<text x="1591.05 1597.30 1604.53 1608.30 1615.80" y="375.40" font-size="12.4" fill="#ccccdc" stroke="#ccccdc" stroke-width="0.3">16:30</text>
<text x="1668.05 1674.30 1681.53 1685.30 1692.80" y="375.40" font-size="12.4" fill="#ccccdc" stroke="#ccccdc" stroke-width="0.3">16:35</text>
<text x="1745.05 1751.30 1758.53 1762.30 1769.80" y="375.40" font-size="12.4" fill="#ccccdc" stroke="#ccccdc" stroke-width="0.3">16:40</text>
<text x="1822.05 1828.30 1835.53 1839.30 1846.80" y="375.40" font-size="12.4" fill="#ccccdc" stroke="#ccccdc" stroke-width="0.3">16:45</text>
<text x="1899.05 1905.30 1912.53 1916.30 1923.80" y="375.40" font-size="12.4" fill="#ccccdc" stroke="#ccccdc" stroke-width="0.3">16:50</text>
<text x="1976.05 1982.30 1989.53 1993.30 2000.80" y="375.40" font-size="12.4" fill="#ccccdc" stroke="#ccccdc" stroke-width="0.3">16:55</text>
<text x="2053.05 2059.30 2066.53 2070.30 2077.80" y="375.40" font-size="12.4" fill="#ccccdc" stroke="#ccccdc" stroke-width="0.3">17:00</text>
<text x="1138.65 1144.90 1152.08 1155.36" y="105.40" font-size="12.4" fill="#ccccdc" stroke="#ccccdc" stroke-width="0.3">12 B</text>
<text x="1138.65 1144.90 1152.08 1155.36" y="147.40" font-size="12.4" fill="#ccccdc" stroke="#ccccdc" stroke-width="0.3">10 B</text>
<text x="1144.90 1152.08 1155.36" y="190.40" font-size="12.4" fill="#ccccdc" stroke="#ccccdc" stroke-width="0.3">8 B</text>
<text x="1144.90 1152.08 1155.36" y="233.40" font-size="12.4" fill="#ccccdc" stroke="#ccccdc" stroke-width="0.3">6 B</text>
<text x="1144.90 1152.08 1155.36" y="275.40" font-size="12.4" fill="#ccccdc" stroke="#ccccdc" stroke-width="0.3">4 B</text>
<text x="1144.90 1152.08 1155.36" y="318.40" font-size="12.4" fill="#ccccdc" stroke="#ccccdc" stroke-width="0.3">2 B</text>
<text x="1144.90 1152.08 1155.36" y="360.40" font-size="12.4" fill="#ccccdc" stroke="#ccccdc" stroke-width="0.3">0 B</text>
<rect x="2106.50" y="99.70" width="14" height="4" rx="1.5" fill="#73bf69"/>
<text x="2128.70" y="106.00" font-size="12.4" fill="#ccccdc" textLength="81.20" lengthAdjust="spacing" stroke="#ccccdc" stroke-width="0.15">Received wg0</text>
<rect x="2106.50" y="122.90" width="14" height="4" rx="1.5" fill="#f2cc0c"/>
<text x="2128.70" y="129.20" font-size="12.4" fill="#ccccdc" textLength="54.40" lengthAdjust="spacing" stroke="#ccccdc" stroke-width="0.15">Sent wg0</text>
</svg>
</div></section>
<section class="panel" style="left:17px;top:394px;width:1102px;height:334px"><div class="abs" style="left:-18px;top:-395px"><span class="t h" style="top:401.40px;font-size:14.4px;color:#ccccdc;letter-spacing:0.362px;-webkit-text-stroke:0.35px #ccccdc;left:26.00px;">Peer Receive Bandwidth</span>
<svg class="cv" style="left:17px;top:394px" width="1102" height="334" viewBox="17 394 1102 334">
<defs><clipPath id="cp7"><rect x="59.30" y="441.50" width="916.10" height="258.00"/></clipPath><linearGradient id="g8" gradientUnits="userSpaceOnUse" x1="0" y1="443.50" x2="0" y2="698.50"><stop offset="0" stop-color="#73bf69" stop-opacity="0.1"/><stop offset="1" stop-color="#73bf69" stop-opacity="0"/></linearGradient><linearGradient id="g9" gradientUnits="userSpaceOnUse" x1="0" y1="443.50" x2="0" y2="698.50"><stop offset="0" stop-color="#f2cc0c" stop-opacity="0.1"/><stop offset="1" stop-color="#f2cc0c" stop-opacity="0"/></linearGradient></defs>
<path d="M111.5,443V702M187.5,443V702M263.5,443V702M340.5,443V702M416.5,443V702M492.5,443V702M569.5,443V702M645.5,443V702M721.5,443V702M797.5,443V702M874.5,443V702M950.5,443V702M59.3,443.5H975.4M59.3,485.5H975.4M59.3,528.5H975.4M59.3,571.5H975.4M59.3,613.5H975.4M59.3,656.5H975.4M59.3,698.5H975.4" stroke="rgba(240,250,255,0.09)" stroke-width="1" fill="none"/>
<g clip-path="url(#cp7)">
<path d="M50.38,698.65C55.47,698.65 60.55,698.65 65.64,698.65C70.72,698.65 75.81,698.65 80.89,698.65C85.98,698.65 91.06,698.65 96.15,698.65C101.23,698.65 106.32,698.65 111.40,698.65C116.48,698.65 121.57,698.65 126.65,698.65C131.74,698.65 136.82,698.65 141.91,698.65C146.99,698.65 152.08,698.65 157.16,698.65C162.25,698.65 167.33,698.65 172.42,698.65C177.50,698.65 182.59,698.65 187.67,698.65C192.75,698.65 197.84,698.65 202.92,698.65C208.01,698.65 213.09,698.65 218.18,698.65C223.26,698.65 228.35,698.65 233.43,698.65C238.52,698.65 243.60,698.65 248.69,698.65C253.77,698.65 258.86,698.65 263.94,698.65C269.02,698.65 274.11,698.65 279.19,698.65C284.28,698.65 289.36,698.65 294.45,698.65C299.53,698.65 304.62,698.65 309.70,698.65C314.79,698.65 319.87,698.65 324.96,698.65C330.04,698.65 335.13,698.65 340.21,698.65C345.29,698.65 350.38,698.65 355.46,698.65C360.55,698.65 365.63,698.65 370.72,698.65C375.80,698.65 380.89,698.65 385.97,698.65C391.06,698.65 396.14,698.65 401.23,698.65C406.31,698.65 411.40,698.65 416.48,698.65C421.56,698.65 426.65,698.65 431.73,698.65C436.82,698.65 441.90,698.65 446.99,698.65C452.07,698.65 457.16,698.65 462.24,698.65C467.33,698.65 472.41,698.65 477.50,698.65C482.58,698.65 487.67,698.65 492.75,698.65C497.83,698.65 502.92,698.65 508.00,698.65C513.09,698.65 518.17,698.65 523.26,698.65C528.34,698.65 533.43,698.65 538.51,698.65C543.60,698.65 548.68,698.65 553.77,698.65C558.85,698.65 563.94,698.65 569.02,698.65C574.10,698.65 579.19,698.65 584.27,698.65C589.36,698.65 594.44,698.65 599.53,698.65C604.61,698.65 609.70,698.65 614.78,698.65C619.87,698.65 624.95,698.65 630.04,698.65C635.12,698.65 640.21,698.65 645.29,698.65C650.37,698.65 655.46,698.65 660.54,698.65C665.63,698.65 670.71,698.65 675.80,698.65C680.88,698.65 685.97,698.65 691.05,698.65C696.14,698.65 701.22,698.65 706.31,698.65C711.39,698.65 716.48,698.65 721.56,698.65C726.64,698.65 731.73,698.65 736.81,698.65C741.90,698.65 746.98,698.65 752.07,698.65C757.15,698.65 762.24,698.65 767.32,698.65C772.41,698.65 777.49,698.65 782.58,698.65C787.66,698.65 792.75,698.65 797.83,698.65C802.91,698.65 808.00,698.65 813.08,698.65C818.17,698.65 823.25,698.65 828.34,698.65C833.42,698.65 838.51,698.65 843.59,698.65C848.68,698.65 853.76,698.65 858.85,698.65C863.93,698.65 869.02,698.65 874.10,698.65C879.18,698.65 884.27,698.65 889.35,698.65C894.44,698.65 899.52,698.65 904.61,698.65C909.69,698.65 914.78,698.65 919.86,698.65C924.95,698.65 930.03,698.65 935.12,698.65C940.20,698.65 945.29,698.65 950.37,698.65C955.45,698.65 960.54,698.65 965.62,698.65L965.62,698.50L50.38,698.50Z" fill="url(#g8)" stroke="none"/>
<path d="M50.38,698.65C55.47,698.65 60.55,698.65 65.64,698.65C70.72,698.65 75.81,698.65 80.89,698.65C85.98,698.65 91.06,698.65 96.15,698.65C101.23,698.65 106.32,698.65 111.40,698.65C116.48,698.65 121.57,698.65 126.65,698.65C131.74,698.65 136.82,698.65 141.91,698.65C146.99,698.65 152.08,698.65 157.16,698.65C162.25,698.65 167.33,698.65 172.42,698.65C177.50,698.65 182.59,698.65 187.67,698.65C192.75,698.65 197.84,698.65 202.92,698.65C208.01,698.65 213.09,698.65 218.18,698.65C223.26,698.65 228.35,698.65 233.43,698.65C238.52,698.65 243.60,698.65 248.69,698.65C253.77,698.65 258.86,698.65 263.94,698.65C269.02,698.65 274.11,698.65 279.19,698.65C284.28,698.65 289.36,698.65 294.45,698.65C299.53,698.65 304.62,698.65 309.70,698.65C314.79,698.65 319.87,698.65 324.96,698.65C330.04,698.65 335.13,698.65 340.21,698.65C345.29,698.65 350.38,698.65 355.46,698.65C360.55,698.65 365.63,698.65 370.72,698.65C375.80,698.65 380.89,698.65 385.97,698.65C391.06,698.65 396.14,698.65 401.23,698.65C406.31,698.65 411.40,698.65 416.48,698.65C421.56,698.65 426.65,698.65 431.73,698.65C436.82,698.65 441.90,698.65 446.99,698.65C452.07,698.65 457.16,698.65 462.24,698.65C467.33,698.65 472.41,698.65 477.50,698.65C482.58,698.65 487.67,698.65 492.75,698.65C497.83,698.65 502.92,698.65 508.00,698.65C513.09,698.65 518.17,698.65 523.26,698.65C528.34,698.65 533.43,698.65 538.51,698.65C543.60,698.65 548.68,698.65 553.77,698.65C558.85,698.65 563.94,698.65 569.02,698.65C574.10,698.65 579.19,698.65 584.27,698.65C589.36,698.65 594.44,698.65 599.53,698.65C604.61,698.65 609.70,698.65 614.78,698.65C619.87,698.65 624.95,698.65 630.04,698.65C635.12,698.65 640.21,698.65 645.29,698.65C650.37,698.65 655.46,698.65 660.54,698.65C665.63,698.65 670.71,698.65 675.80,698.65C680.88,698.65 685.97,698.65 691.05,698.65C696.14,698.65 701.22,698.65 706.31,698.65C711.39,698.65 716.48,698.65 721.56,698.65C726.64,698.65 731.73,698.65 736.81,698.65C741.90,698.65 746.98,698.65 752.07,698.65C757.15,698.65 762.24,698.65 767.32,698.65C772.41,698.65 777.49,698.65 782.58,698.65C787.66,698.65 792.75,698.65 797.83,698.65C802.91,698.65 808.00,698.65 813.08,698.65C818.17,698.65 823.25,698.65 828.34,698.65C833.42,698.65 838.51,698.65 843.59,698.65C848.68,698.65 853.76,698.65 858.85,698.65C863.93,698.65 869.02,698.65 874.10,698.65C879.18,698.65 884.27,698.65 889.35,698.65C894.44,698.65 899.52,698.65 904.61,698.65C909.69,698.65 914.78,698.65 919.86,698.65C924.95,698.65 930.03,698.65 935.12,698.65C940.20,698.65 945.29,698.65 950.37,698.65C955.45,698.65 960.54,698.65 965.62,698.65" fill="none" stroke="#73bf69" stroke-width="1" stroke-linejoin="round"/>
<path d="M50.38,607.83C55.47,607.83 60.55,607.83 65.64,607.83C70.72,607.83 75.81,630.59 80.89,630.59C85.98,630.59 91.06,620.70 96.15,607.83C101.23,594.95 106.32,480.21 111.40,480.21C116.48,480.21 121.57,607.83 126.65,607.83C131.74,607.83 136.82,480.21 141.91,480.21C146.99,480.21 152.08,630.59 157.16,630.59C162.25,630.59 167.33,480.21 172.42,480.21C177.50,480.21 182.59,607.83 187.67,607.83C192.75,607.83 197.84,607.83 202.92,607.83C208.01,607.83 213.09,607.83 218.18,607.83C223.26,607.83 228.35,607.83 233.43,607.83C238.52,607.83 243.60,607.83 248.69,607.83C253.77,607.83 258.86,630.59 263.94,630.59C269.02,630.59 274.11,480.21 279.19,480.21C284.28,480.21 289.36,630.59 294.45,630.59C299.53,630.59 304.62,480.21 309.70,480.21C314.79,480.21 319.87,607.83 324.96,607.83C330.04,607.83 335.13,607.83 340.21,607.83C345.29,607.83 350.38,607.83 355.46,607.83C360.55,607.83 365.63,607.83 370.72,607.83C375.80,607.83 380.89,630.59 385.97,630.59C391.06,630.59 396.14,620.70 401.23,607.83C406.31,594.95 411.40,480.21 416.48,480.21C421.56,480.21 426.65,607.83 431.73,607.83C436.82,607.83 441.90,502.97 446.99,502.97C452.07,502.97 457.16,607.83 462.24,607.83C467.33,607.83 472.41,480.21 477.50,480.21C482.58,480.21 487.67,607.83 492.75,607.83C497.83,607.83 502.92,480.21 508.00,480.21C513.09,480.21 518.17,594.95 523.26,607.83C528.34,620.70 533.43,630.59 538.51,630.59C543.60,630.59 548.68,607.83 553.77,607.83C558.85,607.83 563.94,607.83 569.02,607.83C574.10,607.83 579.19,607.83 584.27,607.83C589.36,607.83 594.44,607.83 599.53,607.83C604.61,607.83 609.70,607.83 614.78,607.83C619.87,607.83 624.95,607.83 630.04,607.83C635.12,607.83 640.21,480.21 645.29,480.21C650.37,480.21 655.46,630.59 660.54,630.59C665.63,630.59 670.71,480.21 675.80,480.21C680.88,480.21 685.97,607.83 691.05,607.83C696.14,607.83 701.22,607.83 706.31,607.83C711.39,607.83 716.48,607.83 721.56,607.83C726.64,607.83 731.73,607.83 736.81,607.83C741.90,607.83 746.98,607.83 752.07,607.83C757.15,607.83 762.24,630.59 767.32,630.59C772.41,630.59 777.49,607.83 782.58,607.83C787.66,607.83 792.75,607.83 797.83,607.83C802.91,607.83 808.00,607.83 813.08,607.83C818.17,607.83 823.25,607.83 828.34,607.83C833.42,607.83 838.51,502.97 843.59,502.97C848.68,502.97 853.76,607.83 858.85,607.83C863.93,607.83 869.02,480.21 874.10,480.21C879.18,480.21 884.27,607.83 889.35,607.83C894.44,607.83 899.52,480.21 904.61,480.21C909.69,480.21 914.78,607.83 919.86,607.83C924.95,607.83 930.03,607.83 935.12,607.83C940.20,607.83 945.29,607.83 950.37,607.83C955.45,607.83 960.54,607.83 965.62,607.83L965.62,698.50L50.38,698.50Z" fill="url(#g9)" stroke="none"/>
<path d="M50.38,607.83C55.47,607.83 60.55,607.83 65.64,607.83C70.72,607.83 75.81,630.59 80.89,630.59C85.98,630.59 91.06,620.70 96.15,607.83C101.23,594.95 106.32,480.21 111.40,480.21C116.48,480.21 121.57,607.83 126.65,607.83C131.74,607.83 136.82,480.21 141.91,480.21C146.99,480.21 152.08,630.59 157.16,630.59C162.25,630.59 167.33,480.21 172.42,480.21C177.50,480.21 182.59,607.83 187.67,607.83C192.75,607.83 197.84,607.83 202.92,607.83C208.01,607.83 213.09,607.83 218.18,607.83C223.26,607.83 228.35,607.83 233.43,607.83C238.52,607.83 243.60,607.83 248.69,607.83C253.77,607.83 258.86,630.59 263.94,630.59C269.02,630.59 274.11,480.21 279.19,480.21C284.28,480.21 289.36,630.59 294.45,630.59C299.53,630.59 304.62,480.21 309.70,480.21C314.79,480.21 319.87,607.83 324.96,607.83C330.04,607.83 335.13,607.83 340.21,607.83C345.29,607.83 350.38,607.83 355.46,607.83C360.55,607.83 365.63,607.83 370.72,607.83C375.80,607.83 380.89,630.59 385.97,630.59C391.06,630.59 396.14,620.70 401.23,607.83C406.31,594.95 411.40,480.21 416.48,480.21C421.56,480.21 426.65,607.83 431.73,607.83C436.82,607.83 441.90,502.97 446.99,502.97C452.07,502.97 457.16,607.83 462.24,607.83C467.33,607.83 472.41,480.21 477.50,480.21C482.58,480.21 487.67,607.83 492.75,607.83C497.83,607.83 502.92,480.21 508.00,480.21C513.09,480.21 518.17,594.95 523.26,607.83C528.34,620.70 533.43,630.59 538.51,630.59C543.60,630.59 548.68,607.83 553.77,607.83C558.85,607.83 563.94,607.83 569.02,607.83C574.10,607.83 579.19,607.83 584.27,607.83C589.36,607.83 594.44,607.83 599.53,607.83C604.61,607.83 609.70,607.83 614.78,607.83C619.87,607.83 624.95,607.83 630.04,607.83C635.12,607.83 640.21,480.21 645.29,480.21C650.37,480.21 655.46,630.59 660.54,630.59C665.63,630.59 670.71,480.21 675.80,480.21C680.88,480.21 685.97,607.83 691.05,607.83C696.14,607.83 701.22,607.83 706.31,607.83C711.39,607.83 716.48,607.83 721.56,607.83C726.64,607.83 731.73,607.83 736.81,607.83C741.90,607.83 746.98,607.83 752.07,607.83C757.15,607.83 762.24,630.59 767.32,630.59C772.41,630.59 777.49,607.83 782.58,607.83C787.66,607.83 792.75,607.83 797.83,607.83C802.91,607.83 808.00,607.83 813.08,607.83C818.17,607.83 823.25,607.83 828.34,607.83C833.42,607.83 838.51,502.97 843.59,502.97C848.68,502.97 853.76,607.83 858.85,607.83C863.93,607.83 869.02,480.21 874.10,480.21C879.18,480.21 884.27,607.83 889.35,607.83C894.44,607.83 899.52,480.21 904.61,480.21C909.69,480.21 914.78,607.83 919.86,607.83C924.95,607.83 930.03,607.83 935.12,607.83C940.20,607.83 945.29,607.83 950.37,607.83C955.45,607.83 960.54,607.83 965.62,607.83" fill="none" stroke="#f2cc0c" stroke-width="1" stroke-linejoin="round"/>
</g>
<text x="95.05 101.30 108.53 112.30 119.80" y="717.40" font-size="12.4" fill="#ccccdc" stroke="#ccccdc" stroke-width="0.3">16:05</text>
<text x="172.30 178.55 185.78 188.30 194.55" y="717.40" font-size="12.4" fill="#ccccdc" stroke="#ccccdc" stroke-width="0.3">16:10</text>
<text x="248.30 254.55 261.78 264.30 270.55" y="717.40" font-size="12.4" fill="#ccccdc" stroke="#ccccdc" stroke-width="0.3">16:15</text>
<text x="324.05 330.30 337.53 341.30 348.80" y="717.40" font-size="12.4" fill="#ccccdc" stroke="#ccccdc" stroke-width="0.3">16:20</text>
<text x="400.05 406.30 413.53 417.30 424.80" y="717.40" font-size="12.4" fill="#ccccdc" stroke="#ccccdc" stroke-width="0.3">16:25</text>
<text x="476.05 482.30 489.53 493.30 500.80" y="717.40" font-size="12.4" fill="#ccccdc" stroke="#ccccdc" stroke-width="0.3">16:30</text>
<text x="553.05 559.30 566.53 570.30 577.80" y="717.40" font-size="12.4" fill="#ccccdc" stroke="#ccccdc" stroke-width="0.3">16:35</text>
<text x="629.05 635.30 642.53 646.30 653.80" y="717.40" font-size="12.4" fill="#ccccdc" stroke="#ccccdc" stroke-width="0.3">16:40</text>
<text x="705.05 711.30 718.53 722.30 729.80" y="717.40" font-size="12.4" fill="#ccccdc" stroke="#ccccdc" stroke-width="0.3">16:45</text>
<text x="781.05 787.30 794.53 798.30 805.80" y="717.40" font-size="12.4" fill="#ccccdc" stroke="#ccccdc" stroke-width="0.3">16:50</text>
<text x="858.05 864.30 871.53 875.30 882.80" y="717.40" font-size="12.4" fill="#ccccdc" stroke="#ccccdc" stroke-width="0.3">16:55</text>
<text x="934.05 940.30 947.53 951.30 958.80" y="717.40" font-size="12.4" fill="#ccccdc" stroke="#ccccdc" stroke-width="0.3">17:00</text>
<text x="28.95 35.20 42.38 45.66" y="447.40" font-size="12.4" fill="#ccccdc" stroke="#ccccdc" stroke-width="0.3">12 B</text>
<text x="28.95 35.20 42.38 45.66" y="489.40" font-size="12.4" fill="#ccccdc" stroke="#ccccdc" stroke-width="0.3">10 B</text>
<text x="35.20 42.38 45.66" y="532.40" font-size="12.4" fill="#ccccdc" stroke="#ccccdc" stroke-width="0.3">8 B</text>
<text x="35.20 42.38 45.66" y="575.40" font-size="12.4" fill="#ccccdc" stroke="#ccccdc" stroke-width="0.3">6 B</text>
<text x="35.20 42.38 45.66" y="617.40" font-size="12.4" fill="#ccccdc" stroke="#ccccdc" stroke-width="0.3">4 B</text>
<text x="35.20 42.38 45.66" y="660.40" font-size="12.4" fill="#ccccdc" stroke="#ccccdc" stroke-width="0.3">2 B</text>
<text x="35.20 42.38 45.66" y="702.40" font-size="12.4" fill="#ccccdc" stroke="#ccccdc" stroke-width="0.3">0 B</text>
<rect x="988.10" y="441.50" width="14" height="4" rx="1.5" fill="#73bf69"/>
<text x="1010.00" y="447.80" font-size="12.4" fill="#ccccdc" textLength="90.20" lengthAdjust="spacing" stroke="#ccccdc" stroke-width="0.15">Peer jRzmDsDR</text>
<rect x="988.10" y="464.70" width="14" height="4" rx="1.5" fill="#f2cc0c"/>
<text x="1010.00" y="471.00" font-size="12.4" fill="#ccccdc" textLength="54.60" lengthAdjust="spacing" stroke="#ccccdc" stroke-width="0.15">Test Peer</text>
</svg>
</div></section>
<section class="panel" style="left:1127px;top:394px;width:1102px;height:334px"><div class="abs" style="left:-1128px;top:-395px"><span class="t h" style="top:401.40px;font-size:14.4px;color:#ccccdc;letter-spacing:0.465px;-webkit-text-stroke:0.35px #ccccdc;left:1136.30px;">Peer Transmit Bandwidth</span>
<svg class="cv" style="left:1127px;top:394px" width="1102" height="334" viewBox="1127 394 1102 334">
<defs><clipPath id="cp10"><rect x="1164.00" y="441.50" width="921.40" height="258.00"/></clipPath><linearGradient id="g11" gradientUnits="userSpaceOnUse" x1="0" y1="443.50" x2="0" y2="698.50"><stop offset="0" stop-color="#73bf69" stop-opacity="0.1"/><stop offset="1" stop-color="#73bf69" stop-opacity="0"/></linearGradient><linearGradient id="g12" gradientUnits="userSpaceOnUse" x1="0" y1="443.50" x2="0" y2="698.50"><stop offset="0" stop-color="#f2cc0c" stop-opacity="0.1"/><stop offset="1" stop-color="#f2cc0c" stop-opacity="0"/></linearGradient></defs>
<path d="M1216.5,443V702M1293.5,443V702M1370.5,443V702M1446.5,443V702M1523.5,443V702M1600.5,443V702M1677.5,443V702M1753.5,443V702M1830.5,443V702M1907.5,443V702M1984.5,443V702M2060.5,443V702M1164.0,481.5H2085.4M1164.0,535.5H2085.4M1164.0,589.5H2085.4M1164.0,644.5H2085.4M1164.0,698.5H2085.4" stroke="rgba(240,250,255,0.09)" stroke-width="1" fill="none"/>
<g clip-path="url(#cp10)">
<path d="M1155.09,698.50C1160.21,698.50 1165.33,698.50 1170.44,698.50C1175.56,698.50 1180.68,698.50 1185.80,698.50C1190.91,698.50 1196.03,698.50 1201.15,698.50C1206.27,698.50 1211.38,698.50 1216.50,698.50C1221.62,698.50 1226.73,698.50 1231.85,698.50C1236.97,698.50 1242.09,698.50 1247.20,698.50C1252.32,698.50 1257.44,698.50 1262.56,698.50C1267.67,698.50 1272.79,698.50 1277.91,698.50C1283.03,698.50 1288.14,698.50 1293.26,698.50C1298.38,698.50 1303.49,698.50 1308.61,698.50C1313.73,698.50 1318.85,698.50 1323.96,698.50C1329.08,698.50 1334.20,698.50 1339.32,698.50C1344.43,698.50 1349.55,698.50 1354.67,698.50C1359.79,698.50 1364.90,698.50 1370.02,698.50C1375.14,698.50 1380.25,698.50 1385.37,698.50C1390.49,698.50 1395.61,698.50 1400.72,698.50C1405.84,698.50 1410.96,698.50 1416.08,698.50C1421.19,698.50 1426.31,698.50 1431.43,698.50C1436.55,698.50 1441.66,698.50 1446.78,698.50C1451.90,698.50 1457.01,698.50 1462.13,698.50C1467.25,698.50 1472.37,698.50 1477.48,698.50C1482.60,698.50 1487.72,698.50 1492.84,698.50C1497.95,698.50 1503.07,698.50 1508.19,698.50C1513.31,698.50 1518.42,698.50 1523.54,698.50C1528.66,698.50 1533.77,698.50 1538.89,698.50C1544.01,698.50 1549.13,698.50 1554.24,698.50C1559.36,698.50 1564.48,698.50 1569.60,698.50C1574.71,698.50 1579.83,698.50 1584.95,698.50C1590.07,698.50 1595.18,698.50 1600.30,698.50C1605.42,698.50 1610.53,698.50 1615.65,698.50C1620.77,698.50 1625.89,698.50 1631.00,698.50C1636.12,698.50 1641.24,698.50 1646.36,698.50C1651.47,698.50 1656.59,698.50 1661.71,698.50C1666.83,698.50 1671.94,698.50 1677.06,698.50C1682.18,698.50 1687.29,698.50 1692.41,698.50C1697.53,698.50 1702.65,698.50 1707.76,698.50C1712.88,698.50 1718.00,698.50 1723.12,698.50C1728.23,698.50 1733.35,698.50 1738.47,698.50C1743.59,698.50 1748.70,698.50 1753.82,698.50C1758.94,698.50 1764.05,698.50 1769.17,698.50C1774.29,698.50 1779.41,698.50 1784.52,698.50C1789.64,698.50 1794.76,698.50 1799.88,698.50C1804.99,698.50 1810.11,698.50 1815.23,698.50C1820.35,698.50 1825.46,698.50 1830.58,698.50C1835.70,698.50 1840.81,698.50 1845.93,698.50C1851.05,698.50 1856.17,698.50 1861.28,698.50C1866.40,698.50 1871.52,698.50 1876.64,698.50C1881.75,698.50 1886.87,698.50 1891.99,698.50C1897.11,698.50 1902.22,698.50 1907.34,698.50C1912.46,698.50 1917.57,698.50 1922.69,698.50C1927.81,698.50 1932.93,698.50 1938.04,698.50C1943.16,698.50 1948.28,698.50 1953.40,698.50C1958.51,698.50 1963.63,698.50 1968.75,698.50C1973.87,698.50 1978.98,698.50 1984.10,698.50C1989.22,698.50 1994.33,698.50 1999.45,698.50C2004.57,698.50 2009.69,698.50 2014.80,698.50C2019.92,698.50 2025.04,698.50 2030.16,698.50C2035.27,698.50 2040.39,698.50 2045.51,698.50C2050.63,698.50 2055.74,698.50 2060.86,698.50C2065.98,698.50 2071.09,698.50 2076.21,698.50L2076.21,698.50L1155.09,698.50Z" fill="url(#g11)" stroke="none"/>
<path d="M1155.09,698.50C1160.21,698.50 1165.33,698.50 1170.44,698.50C1175.56,698.50 1180.68,698.50 1185.80,698.50C1190.91,698.50 1196.03,698.50 1201.15,698.50C1206.27,698.50 1211.38,698.50 1216.50,698.50C1221.62,698.50 1226.73,698.50 1231.85,698.50C1236.97,698.50 1242.09,698.50 1247.20,698.50C1252.32,698.50 1257.44,698.50 1262.56,698.50C1267.67,698.50 1272.79,698.50 1277.91,698.50C1283.03,698.50 1288.14,698.50 1293.26,698.50C1298.38,698.50 1303.49,698.50 1308.61,698.50C1313.73,698.50 1318.85,698.50 1323.96,698.50C1329.08,698.50 1334.20,698.50 1339.32,698.50C1344.43,698.50 1349.55,698.50 1354.67,698.50C1359.79,698.50 1364.90,698.50 1370.02,698.50C1375.14,698.50 1380.25,698.50 1385.37,698.50C1390.49,698.50 1395.61,698.50 1400.72,698.50C1405.84,698.50 1410.96,698.50 1416.08,698.50C1421.19,698.50 1426.31,698.50 1431.43,698.50C1436.55,698.50 1441.66,698.50 1446.78,698.50C1451.90,698.50 1457.01,698.50 1462.13,698.50C1467.25,698.50 1472.37,698.50 1477.48,698.50C1482.60,698.50 1487.72,698.50 1492.84,698.50C1497.95,698.50 1503.07,698.50 1508.19,698.50C1513.31,698.50 1518.42,698.50 1523.54,698.50C1528.66,698.50 1533.77,698.50 1538.89,698.50C1544.01,698.50 1549.13,698.50 1554.24,698.50C1559.36,698.50 1564.48,698.50 1569.60,698.50C1574.71,698.50 1579.83,698.50 1584.95,698.50C1590.07,698.50 1595.18,698.50 1600.30,698.50C1605.42,698.50 1610.53,698.50 1615.65,698.50C1620.77,698.50 1625.89,698.50 1631.00,698.50C1636.12,698.50 1641.24,698.50 1646.36,698.50C1651.47,698.50 1656.59,698.50 1661.71,698.50C1666.83,698.50 1671.94,698.50 1677.06,698.50C1682.18,698.50 1687.29,698.50 1692.41,698.50C1697.53,698.50 1702.65,698.50 1707.76,698.50C1712.88,698.50 1718.00,698.50 1723.12,698.50C1728.23,698.50 1733.35,698.50 1738.47,698.50C1743.59,698.50 1748.70,698.50 1753.82,698.50C1758.94,698.50 1764.05,698.50 1769.17,698.50C1774.29,698.50 1779.41,698.50 1784.52,698.50C1789.64,698.50 1794.76,698.50 1799.88,698.50C1804.99,698.50 1810.11,698.50 1815.23,698.50C1820.35,698.50 1825.46,698.50 1830.58,698.50C1835.70,698.50 1840.81,698.50 1845.93,698.50C1851.05,698.50 1856.17,698.50 1861.28,698.50C1866.40,698.50 1871.52,698.50 1876.64,698.50C1881.75,698.50 1886.87,698.50 1891.99,698.50C1897.11,698.50 1902.22,698.50 1907.34,698.50C1912.46,698.50 1917.57,698.50 1922.69,698.50C1927.81,698.50 1932.93,698.50 1938.04,698.50C1943.16,698.50 1948.28,698.50 1953.40,698.50C1958.51,698.50 1963.63,698.50 1968.75,698.50C1973.87,698.50 1978.98,698.50 1984.10,698.50C1989.22,698.50 1994.33,698.50 1999.45,698.50C2004.57,698.50 2009.69,698.50 2014.80,698.50C2019.92,698.50 2025.04,698.50 2030.16,698.50C2035.27,698.50 2040.39,698.50 2045.51,698.50C2050.63,698.50 2055.74,698.50 2060.86,698.50C2065.98,698.50 2071.09,698.50 2076.21,698.50" fill="none" stroke="#73bf69" stroke-width="1" stroke-linejoin="round"/>
<path d="M1155.09,553.84C1160.21,563.43 1165.33,582.61 1170.44,582.61C1175.56,582.61 1180.68,553.84 1185.80,553.84C1190.91,553.84 1196.03,553.84 1201.15,553.84C1206.27,553.84 1211.38,499.56 1216.50,499.56C1221.62,499.56 1226.73,582.61 1231.85,582.61C1236.97,582.61 1242.09,528.33 1247.20,528.33C1252.32,528.33 1257.44,553.84 1262.56,553.84C1267.67,553.84 1272.79,470.52 1277.91,470.52C1283.03,470.52 1288.14,539.59 1293.26,553.84C1298.38,568.10 1303.49,582.61 1308.61,582.61C1313.73,582.61 1318.85,553.84 1323.96,553.84C1329.08,553.84 1334.20,553.84 1339.32,553.84C1344.43,553.84 1349.55,582.61 1354.67,582.61C1359.79,582.61 1364.90,566.38 1370.02,553.84C1375.14,541.31 1380.25,499.56 1385.37,499.56C1390.49,499.56 1395.61,553.84 1400.72,553.84C1405.84,553.84 1410.96,470.52 1416.08,470.52C1421.19,470.52 1426.31,553.84 1431.43,553.84C1436.55,553.84 1441.66,553.84 1446.78,553.84C1451.90,553.84 1457.01,582.61 1462.13,582.61C1467.25,582.61 1472.37,467.00 1477.48,467.00C1482.60,467.00 1487.72,553.84 1492.84,553.84C1497.95,553.84 1503.07,553.84 1508.19,553.84C1513.31,553.84 1518.42,499.56 1523.54,499.56C1528.66,499.56 1533.77,553.84 1538.89,553.84C1544.01,553.84 1549.13,499.56 1554.24,499.56C1559.36,499.56 1564.48,553.84 1569.60,553.84C1574.71,553.84 1579.83,499.56 1584.95,499.56C1590.07,499.56 1595.18,582.61 1600.30,582.61C1605.42,582.61 1610.53,470.52 1615.65,470.52C1620.77,470.52 1625.89,553.84 1631.00,553.84C1636.12,553.84 1641.24,553.84 1646.36,553.84C1651.47,553.84 1656.59,582.61 1661.71,582.61C1666.83,582.61 1671.94,582.61 1677.06,582.61C1682.18,582.61 1687.29,553.84 1692.41,553.84C1697.53,553.84 1702.65,553.84 1707.76,553.84C1712.88,553.84 1718.00,553.84 1723.12,553.84C1728.23,553.84 1733.35,553.84 1738.47,553.84C1743.59,553.84 1748.70,528.33 1753.82,528.33C1758.94,528.33 1764.05,551.78 1769.17,553.84C1774.29,555.91 1779.41,555.31 1784.52,557.37C1789.64,559.44 1794.76,582.61 1799.88,582.61C1804.99,582.61 1810.11,553.84 1815.23,553.84C1820.35,553.84 1825.46,553.84 1830.58,553.84C1835.70,553.84 1840.81,553.84 1845.93,553.84C1851.05,553.84 1856.17,553.84 1861.28,553.84C1866.40,553.84 1871.52,553.84 1876.64,553.84C1881.75,553.84 1886.87,669.46 1891.99,669.46C1897.11,669.46 1902.22,597.02 1907.34,582.61C1912.46,568.21 1917.57,553.84 1922.69,553.84C1927.81,553.84 1932.93,553.84 1938.04,553.84C1943.16,553.84 1948.28,499.56 1953.40,499.56C1958.51,499.56 1963.63,582.61 1968.75,582.61C1973.87,582.61 1978.98,499.56 1984.10,499.56C1989.22,499.56 1994.33,553.84 1999.45,553.84C2004.57,553.84 2009.69,470.52 2014.80,470.52C2019.92,470.52 2025.04,640.69 2030.16,640.69C2035.27,640.69 2040.39,553.84 2045.51,553.84C2050.63,553.84 2055.74,553.84 2060.86,553.84C2065.98,553.84 2071.09,553.84 2076.21,553.84L2076.21,698.50L1155.09,698.50Z" fill="url(#g12)" stroke="none"/>
<path d="M1155.09,553.84C1160.21,563.43 1165.33,582.61 1170.44,582.61C1175.56,582.61 1180.68,553.84 1185.80,553.84C1190.91,553.84 1196.03,553.84 1201.15,553.84C1206.27,553.84 1211.38,499.56 1216.50,499.56C1221.62,499.56 1226.73,582.61 1231.85,582.61C1236.97,582.61 1242.09,528.33 1247.20,528.33C1252.32,528.33 1257.44,553.84 1262.56,553.84C1267.67,553.84 1272.79,470.52 1277.91,470.52C1283.03,470.52 1288.14,539.59 1293.26,553.84C1298.38,568.10 1303.49,582.61 1308.61,582.61C1313.73,582.61 1318.85,553.84 1323.96,553.84C1329.08,553.84 1334.20,553.84 1339.32,553.84C1344.43,553.84 1349.55,582.61 1354.67,582.61C1359.79,582.61 1364.90,566.38 1370.02,553.84C1375.14,541.31 1380.25,499.56 1385.37,499.56C1390.49,499.56 1395.61,553.84 1400.72,553.84C1405.84,553.84 1410.96,470.52 1416.08,470.52C1421.19,470.52 1426.31,553.84 1431.43,553.84C1436.55,553.84 1441.66,553.84 1446.78,553.84C1451.90,553.84 1457.01,582.61 1462.13,582.61C1467.25,582.61 1472.37,467.00 1477.48,467.00C1482.60,467.00 1487.72,553.84 1492.84,553.84C1497.95,553.84 1503.07,553.84 1508.19,553.84C1513.31,553.84 1518.42,499.56 1523.54,499.56C1528.66,499.56 1533.77,553.84 1538.89,553.84C1544.01,553.84 1549.13,499.56 1554.24,499.56C1559.36,499.56 1564.48,553.84 1569.60,553.84C1574.71,553.84 1579.83,499.56 1584.95,499.56C1590.07,499.56 1595.18,582.61 1600.30,582.61C1605.42,582.61 1610.53,470.52 1615.65,470.52C1620.77,470.52 1625.89,553.84 1631.00,553.84C1636.12,553.84 1641.24,553.84 1646.36,553.84C1651.47,553.84 1656.59,582.61 1661.71,582.61C1666.83,582.61 1671.94,582.61 1677.06,582.61C1682.18,582.61 1687.29,553.84 1692.41,553.84C1697.53,553.84 1702.65,553.84 1707.76,553.84C1712.88,553.84 1718.00,553.84 1723.12,553.84C1728.23,553.84 1733.35,553.84 1738.47,553.84C1743.59,553.84 1748.70,528.33 1753.82,528.33C1758.94,528.33 1764.05,551.78 1769.17,553.84C1774.29,555.91 1779.41,555.31 1784.52,557.37C1789.64,559.44 1794.76,582.61 1799.88,582.61C1804.99,582.61 1810.11,553.84 1815.23,553.84C1820.35,553.84 1825.46,553.84 1830.58,553.84C1835.70,553.84 1840.81,553.84 1845.93,553.84C1851.05,553.84 1856.17,553.84 1861.28,553.84C1866.40,553.84 1871.52,553.84 1876.64,553.84C1881.75,553.84 1886.87,669.46 1891.99,669.46C1897.11,669.46 1902.22,597.02 1907.34,582.61C1912.46,568.21 1917.57,553.84 1922.69,553.84C1927.81,553.84 1932.93,553.84 1938.04,553.84C1943.16,553.84 1948.28,499.56 1953.40,499.56C1958.51,499.56 1963.63,582.61 1968.75,582.61C1973.87,582.61 1978.98,499.56 1984.10,499.56C1989.22,499.56 1994.33,553.84 1999.45,553.84C2004.57,553.84 2009.69,470.52 2014.80,470.52C2019.92,470.52 2025.04,640.69 2030.16,640.69C2035.27,640.69 2040.39,553.84 2045.51,553.84C2050.63,553.84 2055.74,553.84 2060.86,553.84C2065.98,553.84 2071.09,553.84 2076.21,553.84" fill="none" stroke="#f2cc0c" stroke-width="1" stroke-linejoin="round"/>
</g>
<text x="1200.05 1206.30 1213.53 1217.30 1224.80" y="717.40" font-size="12.4" fill="#ccccdc" stroke="#ccccdc" stroke-width="0.3">16:05</text>
<text x="1278.30 1284.55 1291.78 1294.30 1300.55" y="717.40" font-size="12.4" fill="#ccccdc" stroke="#ccccdc" stroke-width="0.3">16:10</text>
<text x="1355.30 1361.55 1368.78 1371.30 1377.55" y="717.40" font-size="12.4" fill="#ccccdc" stroke="#ccccdc" stroke-width="0.3">16:15</text>
<text x="1430.05 1436.30 1443.53 1447.30 1454.80" y="717.40" font-size="12.4" fill="#ccccdc" stroke="#ccccdc" stroke-width="0.3">16:20</text>
<text x="1507.05 1513.30 1520.53 1524.30 1531.80" y="717.40" font-size="12.4" fill="#ccccdc" stroke="#ccccdc" stroke-width="0.3">16:25</text>
<text x="1584.05 1590.30 1597.53 1601.30 1608.80" y="717.40" font-size="12.4" fill="#ccccdc" stroke="#ccccdc" stroke-width="0.3">16:30</text>
<text x="1661.05 1667.30 1674.53 1678.30 1685.80" y="717.40" font-size="12.4" fill="#ccccdc" stroke="#ccccdc" stroke-width="0.3">16:35</text>
<text x="1737.05 1743.30 1750.53 1754.30 1761.80" y="717.40" font-size="12.4" fill="#ccccdc" stroke="#ccccdc" stroke-width="0.3">16:40</text>
<text x="1814.05 1820.30 1827.53 1831.30 1838.80" y="717.40" font-size="12.4" fill="#ccccdc" stroke="#ccccdc" stroke-width="0.3">16:45</text>
<text x="1891.05 1897.30 1904.53 1908.30 1915.80" y="717.40" font-size="12.4" fill="#ccccdc" stroke="#ccccdc" stroke-width="0.3">16:50</text>
<text x="1968.05 1974.30 1981.53 1985.30 1992.80" y="717.40" font-size="12.4" fill="#ccccdc" stroke="#ccccdc" stroke-width="0.3">16:55</text>
<text x="2044.05 2050.30 2057.53 2061.30 2068.80" y="717.40" font-size="12.4" fill="#ccccdc" stroke="#ccccdc" stroke-width="0.3">17:00</text>
<text x="1139.90 1147.08 1150.36" y="485.40" font-size="12.4" fill="#ccccdc" stroke="#ccccdc" stroke-width="0.3">8 B</text>
<text x="1139.90 1147.08 1150.36" y="539.40" font-size="12.4" fill="#ccccdc" stroke="#ccccdc" stroke-width="0.3">6 B</text>
<text x="1139.90 1147.08 1150.36" y="593.40" font-size="12.4" fill="#ccccdc" stroke="#ccccdc" stroke-width="0.3">4 B</text>
<text x="1139.90 1147.08 1150.36" y="648.40" font-size="12.4" fill="#ccccdc" stroke="#ccccdc" stroke-width="0.3">2 B</text>
<text x="1139.90 1147.08 1150.36" y="702.40" font-size="12.4" fill="#ccccdc" stroke="#ccccdc" stroke-width="0.3">0 B</text>
<rect x="2098.40" y="441.50" width="14" height="4" rx="1.5" fill="#73bf69"/>
<text x="2120.40" y="447.80" font-size="12.4" fill="#ccccdc" textLength="90.20" lengthAdjust="spacing" stroke="#ccccdc" stroke-width="0.15">Peer jRzmDsDR</text>
<rect x="2098.40" y="464.70" width="14" height="4" rx="1.5" fill="#f2cc0c"/>
<text x="2120.40" y="471.00" font-size="12.4" fill="#ccccdc" textLength="54.60" lengthAdjust="spacing" stroke="#ccccdc" stroke-width="0.15">Test Peer</text>
</svg>
</div></section>
<section class="panel" style="left:17px;top:736px;width:2212px;height:296px"><div class="abs" style="left:-18px;top:-737px"><span class="t h" style="top:743.40px;font-size:14.4px;color:#ccccdc;letter-spacing:0.469px;-webkit-text-stroke:0.35px #ccccdc;left:26.00px;">Peer Connection History</span>
<svg class="cv" style="left:17px;top:736px" width="2212" height="296" viewBox="17 736 2212 296">
<path d="M287.5,785V1006M461.5,785V1006M634.5,785V1006M807.5,785V1006M981.5,785V1006M1154.5,785V1006M1328.5,785V1006M1501.5,785V1006M1674.5,785V1006M1848.5,785V1006M2021.5,785V1006M2195.5,785V1006" stroke="rgba(240,250,255,0.09)" stroke-width="1" fill="none"/>
<clipPath id="shc"><rect x="135" y="780" width="2080" height="230"/></clipPath><g clip-path="url(#shc)">
<rect x="134.5" y="785.5" width="27.0" height="91" fill="#73bf69" fill-opacity="0.6" stroke="#73bf69" stroke-width="1"/>
<rect x="169.5" y="785.5" width="27.0" height="91" fill="#73bf69" fill-opacity="0.6" stroke="#73bf69" stroke-width="1"/>
<rect x="204.5" y="785.5" width="27.0" height="91" fill="#73bf69" fill-opacity="0.6" stroke="#73bf69" stroke-width="1"/>
<rect x="238.5" y="785.5" width="27.0" height="91" fill="#73bf69" fill-opacity="0.6" stroke="#73bf69" stroke-width="1"/>
<rect x="273.5" y="785.5" width="27.0" height="91" fill="#73bf69" fill-opacity="0.6" stroke="#73bf69" stroke-width="1"/>
<rect x="308.5" y="785.5" width="27.0" height="91" fill="#73bf69" fill-opacity="0.6" stroke="#73bf69" stroke-width="1"/>
<rect x="343.5" y="785.5" width="27.0" height="91" fill="#73bf69" fill-opacity="0.6" stroke="#73bf69" stroke-width="1"/>
<rect x="377.5" y="785.5" width="27.0" height="91" fill="#73bf69" fill-opacity="0.6" stroke="#73bf69" stroke-width="1"/>
<rect x="412.5" y="785.5" width="27.0" height="91" fill="#73bf69" fill-opacity="0.6" stroke="#73bf69" stroke-width="1"/>
<rect x="447.5" y="785.5" width="27.0" height="91" fill="#f2495c" fill-opacity="0.6" stroke="#f2495c" stroke-width="1"/>
<rect x="481.5" y="785.5" width="27.0" height="91" fill="#73bf69" fill-opacity="0.6" stroke="#73bf69" stroke-width="1"/>
<rect x="516.5" y="785.5" width="27.0" height="91" fill="#f2495c" fill-opacity="0.6" stroke="#f2495c" stroke-width="1"/>
<rect x="551.5" y="785.5" width="27.0" height="91" fill="#73bf69" fill-opacity="0.6" stroke="#73bf69" stroke-width="1"/>
<rect x="585.5" y="785.5" width="27.0" height="91" fill="#f2495c" fill-opacity="0.6" stroke="#f2495c" stroke-width="1"/>
<rect x="620.5" y="785.5" width="27.0" height="91" fill="#73bf69" fill-opacity="0.6" stroke="#73bf69" stroke-width="1"/>
<rect x="655.5" y="785.5" width="27.0" height="91" fill="#73bf69" fill-opacity="0.6" stroke="#73bf69" stroke-width="1"/>
<rect x="689.5" y="785.5" width="27.0" height="91" fill="#73bf69" fill-opacity="0.6" stroke="#73bf69" stroke-width="1"/>
<rect x="724.5" y="785.5" width="27.0" height="91" fill="#73bf69" fill-opacity="0.6" stroke="#73bf69" stroke-width="1"/>
<rect x="759.5" y="785.5" width="27.0" height="91" fill="#f2495c" fill-opacity="0.6" stroke="#f2495c" stroke-width="1"/>
<rect x="793.5" y="785.5" width="27.0" height="91" fill="#73bf69" fill-opacity="0.6" stroke="#73bf69" stroke-width="1"/>
<rect x="828.5" y="785.5" width="27.0" height="91" fill="#f2495c" fill-opacity="0.6" stroke="#f2495c" stroke-width="1"/>
<rect x="863.5" y="785.5" width="27.0" height="91" fill="#73bf69" fill-opacity="0.6" stroke="#73bf69" stroke-width="1"/>
<rect x="897.5" y="785.5" width="27.0" height="91" fill="#f2495c" fill-opacity="0.6" stroke="#f2495c" stroke-width="1"/>
<rect x="932.5" y="785.5" width="27.0" height="91" fill="#73bf69" fill-opacity="0.6" stroke="#73bf69" stroke-width="1"/>
<rect x="967.5" y="785.5" width="27.0" height="91" fill="#73bf69" fill-opacity="0.6" stroke="#73bf69" stroke-width="1"/>
<rect x="1001.5" y="785.5" width="27.0" height="91" fill="#73bf69" fill-opacity="0.6" stroke="#73bf69" stroke-width="1"/>
<rect x="1036.5" y="785.5" width="27.0" height="91" fill="#73bf69" fill-opacity="0.6" stroke="#73bf69" stroke-width="1"/>
<rect x="1071.5" y="785.5" width="27.0" height="91" fill="#73bf69" fill-opacity="0.6" stroke="#73bf69" stroke-width="1"/>
<rect x="1105.5" y="785.5" width="27.0" height="91" fill="#73bf69" fill-opacity="0.6" stroke="#73bf69" stroke-width="1"/>
<rect x="1140.5" y="785.5" width="27.0" height="91" fill="#73bf69" fill-opacity="0.6" stroke="#73bf69" stroke-width="1"/>
<rect x="1175.5" y="785.5" width="27.0" height="91" fill="#73bf69" fill-opacity="0.6" stroke="#73bf69" stroke-width="1"/>
<rect x="1210.5" y="785.5" width="27.0" height="91" fill="#f2495c" fill-opacity="0.6" stroke="#f2495c" stroke-width="1"/>
<rect x="1244.5" y="785.5" width="27.0" height="91" fill="#73bf69" fill-opacity="0.6" stroke="#73bf69" stroke-width="1"/>
<rect x="1279.5" y="785.5" width="27.0" height="91" fill="#f2495c" fill-opacity="0.6" stroke="#f2495c" stroke-width="1"/>
<rect x="1314.5" y="785.5" width="27.0" height="91" fill="#73bf69" fill-opacity="0.6" stroke="#73bf69" stroke-width="1"/>
<rect x="1348.5" y="785.5" width="27.0" height="91" fill="#73bf69" fill-opacity="0.6" stroke="#73bf69" stroke-width="1"/>
<rect x="1383.5" y="785.5" width="27.0" height="91" fill="#73bf69" fill-opacity="0.6" stroke="#73bf69" stroke-width="1"/>
<rect x="1418.5" y="785.5" width="27.0" height="91" fill="#73bf69" fill-opacity="0.6" stroke="#73bf69" stroke-width="1"/>
<rect x="1452.5" y="785.5" width="27.0" height="91" fill="#73bf69" fill-opacity="0.6" stroke="#73bf69" stroke-width="1"/>
<rect x="1487.5" y="785.5" width="27.0" height="91" fill="#73bf69" fill-opacity="0.6" stroke="#73bf69" stroke-width="1"/>
<rect x="1522.5" y="785.5" width="27.0" height="91" fill="#73bf69" fill-opacity="0.6" stroke="#73bf69" stroke-width="1"/>
<rect x="1556.5" y="785.5" width="27.0" height="91" fill="#73bf69" fill-opacity="0.6" stroke="#73bf69" stroke-width="1"/>
<rect x="1591.5" y="785.5" width="27.0" height="91" fill="#f2495c" fill-opacity="0.6" stroke="#f2495c" stroke-width="1"/>
<rect x="1626.5" y="785.5" width="27.0" height="91" fill="#73bf69" fill-opacity="0.6" stroke="#73bf69" stroke-width="1"/>
<rect x="1660.5" y="785.5" width="27.0" height="91" fill="#f2495c" fill-opacity="0.6" stroke="#f2495c" stroke-width="1"/>
<rect x="1695.5" y="785.5" width="27.0" height="91" fill="#73bf69" fill-opacity="0.6" stroke="#73bf69" stroke-width="1"/>
<rect x="1730.5" y="785.5" width="27.0" height="91" fill="#f2495c" fill-opacity="0.6" stroke="#f2495c" stroke-width="1"/>
<rect x="1764.5" y="785.5" width="27.0" height="91" fill="#73bf69" fill-opacity="0.6" stroke="#73bf69" stroke-width="1"/>
<rect x="1799.5" y="785.5" width="27.0" height="91" fill="#f2495c" fill-opacity="0.6" stroke="#f2495c" stroke-width="1"/>
<rect x="1834.5" y="785.5" width="27.0" height="91" fill="#73bf69" fill-opacity="0.6" stroke="#73bf69" stroke-width="1"/>
<rect x="1868.5" y="785.5" width="27.0" height="91" fill="#73bf69" fill-opacity="0.6" stroke="#73bf69" stroke-width="1"/>
<rect x="1903.5" y="785.5" width="27.0" height="91" fill="#73bf69" fill-opacity="0.6" stroke="#73bf69" stroke-width="1"/>
<rect x="1938.5" y="785.5" width="27.0" height="91" fill="#73bf69" fill-opacity="0.6" stroke="#73bf69" stroke-width="1"/>
<rect x="1972.5" y="785.5" width="27.0" height="91" fill="#73bf69" fill-opacity="0.6" stroke="#73bf69" stroke-width="1"/>
<rect x="2007.5" y="785.5" width="27.0" height="91" fill="#73bf69" fill-opacity="0.6" stroke="#73bf69" stroke-width="1"/>
<rect x="2042.5" y="785.5" width="27.0" height="91" fill="#73bf69" fill-opacity="0.6" stroke="#73bf69" stroke-width="1"/>
<rect x="2077.5" y="785.5" width="27.0" height="91" fill="#73bf69" fill-opacity="0.6" stroke="#73bf69" stroke-width="1"/>
<rect x="2111.5" y="785.5" width="27.0" height="91" fill="#f2495c" fill-opacity="0.6" stroke="#f2495c" stroke-width="1"/>
<rect x="2146.5" y="785.5" width="27.0" height="91" fill="#73bf69" fill-opacity="0.6" stroke="#73bf69" stroke-width="1"/>
<rect x="2181.5" y="785.5" width="27.0" height="91" fill="#73bf69" fill-opacity="0.6" stroke="#73bf69" stroke-width="1"/>
<rect x="134.5" y="910.5" width="27.0" height="91" fill="#f2495c" fill-opacity="0.6" stroke="#f2495c" stroke-width="1"/>
<rect x="169.5" y="910.5" width="27.0" height="91" fill="#f2495c" fill-opacity="0.6" stroke="#f2495c" stroke-width="1"/>
<rect x="204.5" y="910.5" width="27.0" height="91" fill="#f2495c" fill-opacity="0.6" stroke="#f2495c" stroke-width="1"/>
<rect x="238.5" y="910.5" width="27.0" height="91" fill="#f2495c" fill-opacity="0.6" stroke="#f2495c" stroke-width="1"/>
<rect x="273.5" y="910.5" width="27.0" height="91" fill="#f2495c" fill-opacity="0.6" stroke="#f2495c" stroke-width="1"/>
<rect x="308.5" y="910.5" width="27.0" height="91" fill="#f2495c" fill-opacity="0.6" stroke="#f2495c" stroke-width="1"/>
<rect x="343.5" y="910.5" width="27.0" height="91" fill="#f2495c" fill-opacity="0.6" stroke="#f2495c" stroke-width="1"/>
<rect x="377.5" y="910.5" width="27.0" height="91" fill="#f2495c" fill-opacity="0.6" stroke="#f2495c" stroke-width="1"/>
<rect x="412.5" y="910.5" width="27.0" height="91" fill="#f2495c" fill-opacity="0.6" stroke="#f2495c" stroke-width="1"/>
<rect x="447.5" y="910.5" width="27.0" height="91" fill="#f2495c" fill-opacity="0.6" stroke="#f2495c" stroke-width="1"/>
<rect x="481.5" y="910.5" width="27.0" height="91" fill="#f2495c" fill-opacity="0.6" stroke="#f2495c" stroke-width="1"/>
<rect x="516.5" y="910.5" width="27.0" height="91" fill="#f2495c" fill-opacity="0.6" stroke="#f2495c" stroke-width="1"/>
<rect x="551.5" y="910.5" width="27.0" height="91" fill="#f2495c" fill-opacity="0.6" stroke="#f2495c" stroke-width="1"/>
<rect x="585.5" y="910.5" width="27.0" height="91" fill="#f2495c" fill-opacity="0.6" stroke="#f2495c" stroke-width="1"/>
<rect x="620.5" y="910.5" width="27.0" height="91" fill="#f2495c" fill-opacity="0.6" stroke="#f2495c" stroke-width="1"/>
<rect x="655.5" y="910.5" width="27.0" height="91" fill="#f2495c" fill-opacity="0.6" stroke="#f2495c" stroke-width="1"/>
<rect x="689.5" y="910.5" width="27.0" height="91" fill="#f2495c" fill-opacity="0.6" stroke="#f2495c" stroke-width="1"/>
<rect x="724.5" y="910.5" width="27.0" height="91" fill="#f2495c" fill-opacity="0.6" stroke="#f2495c" stroke-width="1"/>
<rect x="759.5" y="910.5" width="27.0" height="91" fill="#f2495c" fill-opacity="0.6" stroke="#f2495c" stroke-width="1"/>
<rect x="793.5" y="910.5" width="27.0" height="91" fill="#f2495c" fill-opacity="0.6" stroke="#f2495c" stroke-width="1"/>
<rect x="828.5" y="910.5" width="27.0" height="91" fill="#f2495c" fill-opacity="0.6" stroke="#f2495c" stroke-width="1"/>
<rect x="863.5" y="910.5" width="27.0" height="91" fill="#f2495c" fill-opacity="0.6" stroke="#f2495c" stroke-width="1"/>
<rect x="897.5" y="910.5" width="27.0" height="91" fill="#f2495c" fill-opacity="0.6" stroke="#f2495c" stroke-width="1"/>
<rect x="932.5" y="910.5" width="27.0" height="91" fill="#f2495c" fill-opacity="0.6" stroke="#f2495c" stroke-width="1"/>
<rect x="967.5" y="910.5" width="27.0" height="91" fill="#f2495c" fill-opacity="0.6" stroke="#f2495c" stroke-width="1"/>
<rect x="1001.5" y="910.5" width="27.0" height="91" fill="#f2495c" fill-opacity="0.6" stroke="#f2495c" stroke-width="1"/>
<rect x="1036.5" y="910.5" width="27.0" height="91" fill="#f2495c" fill-opacity="0.6" stroke="#f2495c" stroke-width="1"/>
<rect x="1071.5" y="910.5" width="27.0" height="91" fill="#f2495c" fill-opacity="0.6" stroke="#f2495c" stroke-width="1"/>
<rect x="1105.5" y="910.5" width="27.0" height="91" fill="#f2495c" fill-opacity="0.6" stroke="#f2495c" stroke-width="1"/>
<rect x="1140.5" y="910.5" width="27.0" height="91" fill="#f2495c" fill-opacity="0.6" stroke="#f2495c" stroke-width="1"/>
<rect x="1175.5" y="910.5" width="27.0" height="91" fill="#f2495c" fill-opacity="0.6" stroke="#f2495c" stroke-width="1"/>
<rect x="1210.5" y="910.5" width="27.0" height="91" fill="#f2495c" fill-opacity="0.6" stroke="#f2495c" stroke-width="1"/>
<rect x="1244.5" y="910.5" width="27.0" height="91" fill="#f2495c" fill-opacity="0.6" stroke="#f2495c" stroke-width="1"/>
<rect x="1279.5" y="910.5" width="27.0" height="91" fill="#f2495c" fill-opacity="0.6" stroke="#f2495c" stroke-width="1"/>
<rect x="1314.5" y="910.5" width="27.0" height="91" fill="#f2495c" fill-opacity="0.6" stroke="#f2495c" stroke-width="1"/>
<rect x="1348.5" y="910.5" width="27.0" height="91" fill="#f2495c" fill-opacity="0.6" stroke="#f2495c" stroke-width="1"/>
<rect x="1383.5" y="910.5" width="27.0" height="91" fill="#f2495c" fill-opacity="0.6" stroke="#f2495c" stroke-width="1"/>
<rect x="1418.5" y="910.5" width="27.0" height="91" fill="#f2495c" fill-opacity="0.6" stroke="#f2495c" stroke-width="1"/>
<rect x="1452.5" y="910.5" width="27.0" height="91" fill="#f2495c" fill-opacity="0.6" stroke="#f2495c" stroke-width="1"/>
<rect x="1487.5" y="910.5" width="27.0" height="91" fill="#f2495c" fill-opacity="0.6" stroke="#f2495c" stroke-width="1"/>
<rect x="1522.5" y="910.5" width="27.0" height="91" fill="#f2495c" fill-opacity="0.6" stroke="#f2495c" stroke-width="1"/>
<rect x="1556.5" y="910.5" width="27.0" height="91" fill="#f2495c" fill-opacity="0.6" stroke="#f2495c" stroke-width="1"/>
<rect x="1591.5" y="910.5" width="27.0" height="91" fill="#f2495c" fill-opacity="0.6" stroke="#f2495c" stroke-width="1"/>
<rect x="1626.5" y="910.5" width="27.0" height="91" fill="#f2495c" fill-opacity="0.6" stroke="#f2495c" stroke-width="1"/>
<rect x="1660.5" y="910.5" width="27.0" height="91" fill="#f2495c" fill-opacity="0.6" stroke="#f2495c" stroke-width="1"/>
<rect x="1695.5" y="910.5" width="27.0" height="91" fill="#f2495c" fill-opacity="0.6" stroke="#f2495c" stroke-width="1"/>
<rect x="1730.5" y="910.5" width="27.0" height="91" fill="#f2495c" fill-opacity="0.6" stroke="#f2495c" stroke-width="1"/>
<rect x="1764.5" y="910.5" width="27.0" height="91" fill="#f2495c" fill-opacity="0.6" stroke="#f2495c" stroke-width="1"/>
<rect x="1799.5" y="910.5" width="27.0" height="91" fill="#f2495c" fill-opacity="0.6" stroke="#f2495c" stroke-width="1"/>
<rect x="1834.5" y="910.5" width="27.0" height="91" fill="#f2495c" fill-opacity="0.6" stroke="#f2495c" stroke-width="1"/>
<rect x="1868.5" y="910.5" width="27.0" height="91" fill="#f2495c" fill-opacity="0.6" stroke="#f2495c" stroke-width="1"/>
<rect x="1903.5" y="910.5" width="27.0" height="91" fill="#f2495c" fill-opacity="0.6" stroke="#f2495c" stroke-width="1"/>
<rect x="1938.5" y="910.5" width="27.0" height="91" fill="#f2495c" fill-opacity="0.6" stroke="#f2495c" stroke-width="1"/>
<rect x="1972.5" y="910.5" width="27.0" height="91" fill="#f2495c" fill-opacity="0.6" stroke="#f2495c" stroke-width="1"/>
<rect x="2007.5" y="910.5" width="27.0" height="91" fill="#f2495c" fill-opacity="0.6" stroke="#f2495c" stroke-width="1"/>
<rect x="2042.5" y="910.5" width="27.0" height="91" fill="#f2495c" fill-opacity="0.6" stroke="#f2495c" stroke-width="1"/>
<rect x="2077.5" y="910.5" width="27.0" height="91" fill="#f2495c" fill-opacity="0.6" stroke="#f2495c" stroke-width="1"/>
<rect x="2111.5" y="910.5" width="27.0" height="91" fill="#f2495c" fill-opacity="0.6" stroke="#f2495c" stroke-width="1"/>
<rect x="2146.5" y="910.5" width="27.0" height="91" fill="#f2495c" fill-opacity="0.6" stroke="#f2495c" stroke-width="1"/>
<rect x="2181.5" y="910.5" width="27.0" height="91" fill="#f2495c" fill-opacity="0.6" stroke="#f2495c" stroke-width="1"/>
</g>
<text x="270.72 276.97 284.20 287.97 295.47" y="1021.20" font-size="12.4" fill="#ccccdc" stroke="#ccccdc" stroke-width="0.3">16:06</text>
<text x="446.62 452.87 460.10 462.62 467.62" y="1021.20" font-size="12.4" fill="#ccccdc" stroke="#ccccdc" stroke-width="0.3">16:11</text>
<text x="618.77 625.02 632.25 634.77 641.02" y="1021.20" font-size="12.4" fill="#ccccdc" stroke="#ccccdc" stroke-width="0.3">16:16</text>
<text x="792.17 798.42 805.65 809.42 815.67" y="1021.20" font-size="12.4" fill="#ccccdc" stroke="#ccccdc" stroke-width="0.3">16:21</text>
<text x="964.32 970.57 977.80 981.57 989.07" y="1021.20" font-size="12.4" fill="#ccccdc" stroke="#ccccdc" stroke-width="0.3">16:26</text>
<text x="1138.97 1145.22 1152.45 1156.22 1162.47" y="1021.20" font-size="12.4" fill="#ccccdc" stroke="#ccccdc" stroke-width="0.3">16:31</text>
<text x="1311.12 1317.37 1324.60 1328.37 1335.87" y="1021.20" font-size="12.4" fill="#ccccdc" stroke="#ccccdc" stroke-width="0.3">16:36</text>
<text x="1485.77 1492.02 1499.25 1503.02 1509.27" y="1021.20" font-size="12.4" fill="#ccccdc" stroke="#ccccdc" stroke-width="0.3">16:41</text>
<text x="1657.92 1664.17 1671.40 1675.17 1682.67" y="1021.20" font-size="12.4" fill="#ccccdc" stroke="#ccccdc" stroke-width="0.3">16:46</text>
<text x="1832.57 1838.82 1846.05 1849.82 1856.07" y="1021.20" font-size="12.4" fill="#ccccdc" stroke="#ccccdc" stroke-width="0.3">16:51</text>
<text x="2004.72 2010.97 2018.20 2021.97 2029.47" y="1021.20" font-size="12.4" fill="#ccccdc" stroke="#ccccdc" stroke-width="0.3">16:56</text>
<text x="2179.37 2185.62 2192.85 2196.62 2202.87" y="1021.20" font-size="12.4" fill="#ccccdc" stroke="#ccccdc" stroke-width="0.3">17:01</text>
<text x="119.00" y="834.50" font-size="12.4" fill="#ccccdc" text-anchor="end" textLength="54.50" lengthAdjust="spacing">Test Peer</text>
<text x="119.00" y="959.80" font-size="12.4" fill="#ccccdc" text-anchor="end" textLength="90.60" lengthAdjust="spacing">Peer jRzmDsDR</text>
</svg>
</div></section>
<section class="panel" style="left:17px;top:1040px;width:2212px;height:170px"><div class="abs" style="left:-18px;top:-1041px"><span class="t h" style="top:1047.40px;font-size:14.4px;color:#ccccdc;letter-spacing:0.320px;-webkit-text-stroke:0.35px #ccccdc;left:26.00px;">Peer Info</span>
<div class="hl" style="left:26px;top:1109px;width:2194px"></div>
<div class="hl" style="left:26px;top:1145px;width:2194px"></div>
<div class="vln" style="left:299px;top:1110px;height:72px"></div>
<div class="vln" style="left:574px;top:1110px;height:72px"></div>
<div class="vln" style="left:848px;top:1110px;height:72px"></div>
<div class="vln" style="left:1122px;top:1110px;height:72px"></div>
<div class="vln" style="left:1396px;top:1110px;height:72px"></div>
<div class="vln" style="left:1671px;top:1110px;height:72px"></div>
<div class="vln" style="left:1945px;top:1110px;height:72px"></div>
<div role="row">
<span class="t" style="top:1084.90px;font-size:14.4px;color:#ccccdc;letter-spacing:0.671px;-webkit-text-stroke:0.3px #ccccdc;left:32.20px;">Interface</span>
<span class="t" style="top:1084.90px;font-size:14.4px;color:#ccccdc;letter-spacing:0.529px;-webkit-text-stroke:0.3px #ccccdc;left:306.45px;">Name</span>
<span class="t" style="top:1084.90px;font-size:14.4px;color:#ccccdc;letter-spacing:0.446px;-webkit-text-stroke:0.3px #ccccdc;left:580.70px;">IP Addresses</span>
<span class="t" style="top:1084.90px;font-size:14.4px;color:#ccccdc;letter-spacing:0.329px;-webkit-text-stroke:0.3px #ccccdc;left:854.95px;">Public Key</span>
<span class="t" style="top:1084.90px;font-size:14.4px;color:#ccccdc;letter-spacing:0.424px;-webkit-text-stroke:0.3px #ccccdc;right:-1387.47px;">Received</span>
<span class="t" style="top:1084.90px;font-size:14.4px;color:#ccccdc;letter-spacing:0.551px;-webkit-text-stroke:0.3px #ccccdc;right:-1661.85px;">Transmitted</span>
<span class="t" style="top:1084.90px;font-size:14.4px;color:#ccccdc;letter-spacing:0.341px;-webkit-text-stroke:0.3px #ccccdc;right:-1935.89px;">Last Handshake</span>
<span class="t" style="top:1084.90px;font-size:14.4px;color:#ccccdc;letter-spacing:0.543px;-webkit-text-stroke:0.3px #ccccdc;right:-2210.24px;">Connected</span>
</div>
<div role="row">
<span class="t" style="top:1117.90px;font-size:14.4px;color:#ccccdc;letter-spacing:0.591px;-webkit-text-stroke:0.2px #ccccdc;left:32.20px;">wg0</span>
<span class="t" style="top:1117.90px;font-size:14.4px;color:#ccccdc;letter-spacing:-0.026px;-webkit-text-stroke:0.2px #ccccdc;left:306.45px;">Peer jRzmDsDR</span>
<div style="position:absolute;left:574.50px;top:1110px;width:272.75px;height:36px;overflow:hidden"><span class="t" style="top:7.90px;font-size:14.4px;color:#ccccdc;letter-spacing:0.067px;-webkit-text-stroke:0.2px #ccccdc;left:6.20px;">10.11.12.2/32,fdfd:d3ad:c0de:1234::1/128</span></div>
<div style="position:absolute;left:848.75px;top:1110px;width:272.75px;height:36px;overflow:hidden"><span class="t" style="top:7.90px;font-size:14.4px;color:#ccccdc;letter-spacing:-0.081px;-webkit-text-stroke:0.2px #ccccdc;left:6.20px;">jRzmDsDRVnwCt13vsyamXherk9L9RhRd</span></div>
<span class="t" style="top:1117.90px;font-size:14.4px;color:#ccccdc;letter-spacing:0.193px;-webkit-text-stroke:0.2px #ccccdc;right:-1390.44px;">0 B</span>
<span class="t" style="top:1117.90px;font-size:14.4px;color:#ccccdc;letter-spacing:0.193px;-webkit-text-stroke:0.2px #ccccdc;right:-1664.69px;">0 B</span>
<span class="t" style="top:1117.90px;font-size:14.4px;color:#f2495c;letter-spacing:0.592px;-webkit-text-stroke:0.2px #f2495c;right:-2214.39px;">No</span>
</div>
<div role="row">
<span class="t" style="top:1153.90px;font-size:14.4px;color:#ccccdc;letter-spacing:0.591px;-webkit-text-stroke:0.2px #ccccdc;left:32.20px;">wg0</span>
<span class="t" style="top:1153.90px;font-size:14.4px;color:#ccccdc;letter-spacing:0.396px;-webkit-text-stroke:0.2px #ccccdc;left:306.45px;">Test Peer</span>
<div style="position:absolute;left:574.50px;top:1146px;width:272.75px;height:36px;overflow:hidden"><span class="t" style="top:7.90px;font-size:14.4px;color:#ccccdc;letter-spacing:0.067px;-webkit-text-stroke:0.2px #ccccdc;left:6.20px;">10.11.12.3/32,fdfd:d3ad:c0de:1234::2/128</span></div>
<div style="position:absolute;left:848.75px;top:1146px;width:272.75px;height:36px;overflow:hidden"><span class="t" style="top:7.90px;font-size:14.4px;color:#ccccdc;letter-spacing:0.421px;-webkit-text-stroke:0.2px #ccccdc;left:6.20px;">+8he+pyWH7Oa9g2FVjIxQzy04brLX+DY</span></div>
<span class="t" style="top:1153.90px;font-size:14.4px;color:#ccccdc;letter-spacing:-0.705px;-webkit-text-stroke:0.2px #ccccdc;right:-1389.54px;">19.1 KiB</span>
<span class="t" style="top:1153.90px;font-size:14.4px;color:#ccccdc;letter-spacing:-0.134px;-webkit-text-stroke:0.2px #ccccdc;right:-1664.37px;">19.8 KiB</span>
<span class="t" style="top:1153.90px;font-size:14.4px;color:#ccccdc;letter-spacing:0.154px;-webkit-text-stroke:0.2px #ccccdc;right:-1938.90px;">26.7 s</span>
<span class="t" style="top:1153.90px;font-size:14.4px;color:#73bf69;letter-spacing:0.254px;-webkit-text-stroke:0.2px #73bf69;right:-2214.05px;">Yes</span>
</div>
</div></section>
</body></html>
